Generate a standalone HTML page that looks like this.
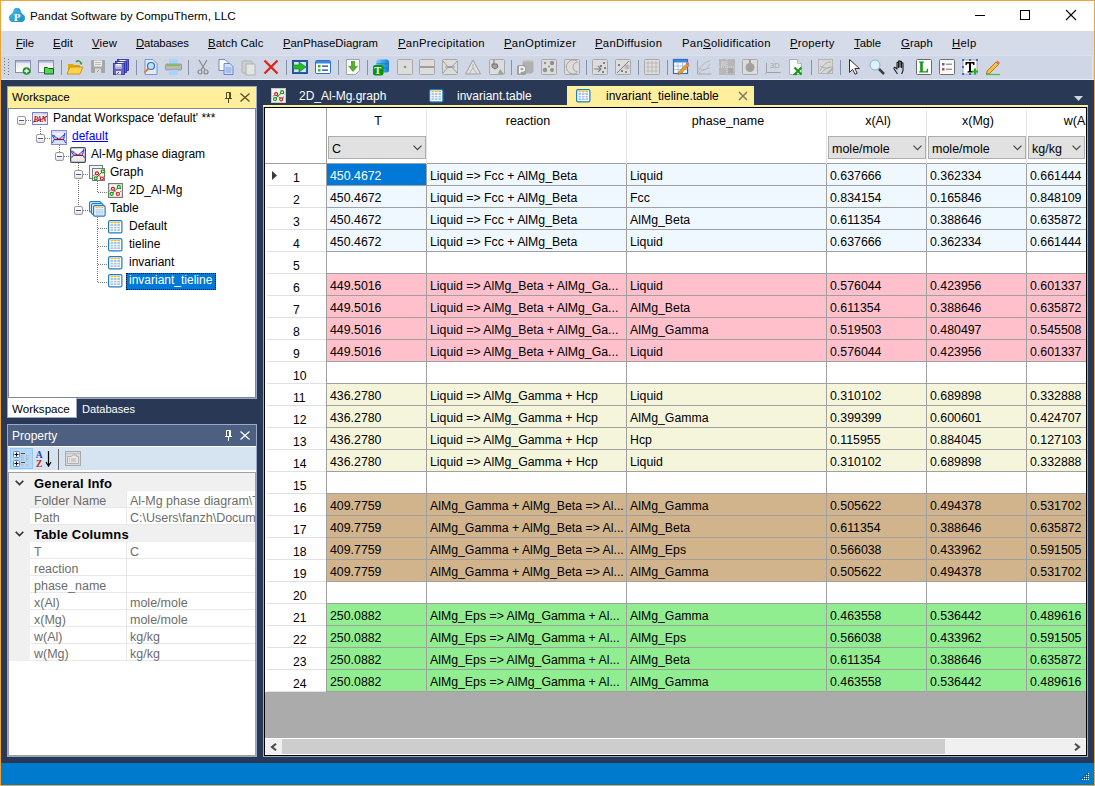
<!DOCTYPE html><html><head><meta charset="utf-8"><title>Pandat</title><style>
*{box-sizing:border-box}
body{margin:0;width:1095px;height:786px;overflow:hidden;position:relative;background:#293955;font-family:"Liberation Sans",sans-serif;color:#000}
.ab{position:absolute}
.t{position:absolute;white-space:pre;line-height:1}
svg{position:absolute;overflow:visible}
</style></head><body>
<div class="ab" style="left:0;top:0;width:1095px;height:31px;background:#fff"></div>
<svg style="left:9px;top:7px" width="16" height="16" viewBox="0 0 16 16"><defs><linearGradient id="apg" x1="0" y1="0" x2="1" y2="1"><stop offset="0" stop-color="#4ab4dc"/><stop offset="1" stop-color="#1590c4"/></linearGradient></defs><g fill="url(#apg)"><circle cx="8" cy="4.3" r="3.6"/><circle cx="4" cy="11" r="4"/><circle cx="12" cy="11" r="4"/><path d="M5 3.5L11 3.5L15.5 10L13 15H3L0.5 10z"/></g><text x="4.8" y="14.2" font-size="11" font-weight="bold" font-family="Liberation Serif" fill="#fff">P</text></svg>
<div class="t" style="left:30px;top:10px;font-size:11.75px;color:#000">Pandat Software by CompuTherm, LLC</div>
<div class="ab" style="left:975px;top:15px;width:10px;height:1px;background:#000"></div>
<div class="ab" style="left:1020px;top:10px;width:10px;height:10px;border:1px solid #000"></div>
<svg style="left:1066px;top:10px" width="10" height="10" viewBox="0 0 10 10"><path d="M0 0 L10 10 M10 0 L0 10" stroke="#000" stroke-width="1.1"/></svg>
<div class="ab" style="left:0;top:31px;width:1095px;height:24px;background:#d6dbe9"></div>
<div class="t" style="left:16px;top:38px;font-size:11.3px;letter-spacing:-0.1px;color:#000"><u>F</u>ile</div>
<div class="t" style="left:53px;top:38px;font-size:11.3px;letter-spacing:0.13px;color:#000"><u>E</u>dit</div>
<div class="t" style="left:92px;top:38px;font-size:11.3px;letter-spacing:0.17px;color:#000"><u>V</u>iew</div>
<div class="t" style="left:136px;top:38px;font-size:11.3px;letter-spacing:-0.14px;color:#000"><u>D</u>atabases</div>
<div class="t" style="left:208px;top:38px;font-size:11.3px;letter-spacing:0.08px;color:#000"><u>B</u>atch Calc</div>
<div class="t" style="left:283px;top:38px;font-size:11.3px;letter-spacing:0.01px;color:#000"><u>P</u>anPhaseDiagram</div>
<div class="t" style="left:398px;top:38px;font-size:11.3px;letter-spacing:0.29px;color:#000"><u>P</u>anPrecipitation</div>
<div class="t" style="left:504px;top:38px;font-size:11.3px;letter-spacing:0.32px;color:#000"><u>P</u>anOptimizer</div>
<div class="t" style="left:595px;top:38px;font-size:11.3px;letter-spacing:0.28px;color:#000"><u>P</u>anDiffusion</div>
<div class="t" style="left:682px;top:38px;font-size:11.3px;letter-spacing:0.31px;color:#000">Pan<u>S</u>olidification</div>
<div class="t" style="left:790px;top:38px;font-size:11.3px;letter-spacing:0.23px;color:#000"><u>P</u>roperty</div>
<div class="t" style="left:854px;top:38px;font-size:11.3px;letter-spacing:0px;color:#000"><u>T</u>able</div>
<div class="t" style="left:901px;top:38px;font-size:11.3px;letter-spacing:0.08px;color:#000"><u>G</u>raph</div>
<div class="t" style="left:952px;top:38px;font-size:11.3px;letter-spacing:0.31px;color:#000"><u>H</u>elp</div>
<div class="ab" style="left:0;top:55px;width:1095px;height:1px;background:#dde1ee"></div>
<div class="ab" style="left:0;top:56px;width:1095px;height:23px;background:#cfd6e5"></div>
<div class="ab" style="left:1092px;top:56px;width:1px;height:23px;background:#dde3f0"></div>
<div class="ab" style="left:0;top:79px;width:1095px;height:1px;background:#e9ecf5"></div>
<div class="ab" style="left:4px;top:58px;width:1px;height:1px;background:#6d7587"></div>
<div class="ab" style="left:8px;top:59px;width:1px;height:1px;background:#6d7587"></div>
<div class="ab" style="left:4px;top:61px;width:1px;height:1px;background:#6d7587"></div>
<div class="ab" style="left:8px;top:62px;width:1px;height:1px;background:#6d7587"></div>
<div class="ab" style="left:4px;top:64px;width:1px;height:1px;background:#6d7587"></div>
<div class="ab" style="left:8px;top:65px;width:1px;height:1px;background:#6d7587"></div>
<div class="ab" style="left:4px;top:67px;width:1px;height:1px;background:#6d7587"></div>
<div class="ab" style="left:8px;top:68px;width:1px;height:1px;background:#6d7587"></div>
<div class="ab" style="left:4px;top:70px;width:1px;height:1px;background:#6d7587"></div>
<div class="ab" style="left:8px;top:71px;width:1px;height:1px;background:#6d7587"></div>
<div class="ab" style="left:4px;top:73px;width:1px;height:1px;background:#6d7587"></div>
<div class="ab" style="left:8px;top:74px;width:1px;height:1px;background:#6d7587"></div>
<svg style="left:15px;top:59px" width="16" height="16" viewBox="0 0 16 16"><defs><linearGradient id="wg" x1="0" y1="0" x2="0" y2="1"><stop offset="0" stop-color="#e4e4e4"/><stop offset="1" stop-color="#ffffff"/></linearGradient></defs><rect x="0.5" y="1.5" width="15" height="12" fill="url(#wg)" stroke="#8c8cb8"/><rect x="1" y="2" width="14" height="1.6" fill="#b4b4d8"/><circle cx="11.5" cy="12" r="3.8" fill="#129a12"/><rect x="10.8" y="9.8" width="1.5" height="4.5" fill="#fff"/><rect x="9.3" y="11.3" width="4.5" height="1.5" fill="#fff"/></svg>
<svg style="left:38px;top:59px" width="16" height="16" viewBox="0 0 16 16"><defs><linearGradient id="wg" x1="0" y1="0" x2="0" y2="1"><stop offset="0" stop-color="#e4e4e4"/><stop offset="1" stop-color="#ffffff"/></linearGradient></defs><rect x="0.5" y="1.5" width="15" height="12" fill="url(#wg)" stroke="#8c8cb8"/><rect x="1" y="2" width="14" height="1.6" fill="#b4b4d8"/><path d="M6.5 8.5h3l1 1h5v5.5h-9z" fill="#5cd25c" stroke="#0a6a0a" stroke-width="1"/></svg>
<div class="ab" style="left:61px;top:60px;width:1px;height:15px;background:#8591a8"></div>
<svg style="left:67px;top:59px" width="16" height="16" viewBox="0 0 16 16"><path d="M1 5h5l1 1h6v9H1z" fill="#e0a800"/><path d="M3 8h13l-3 7H0z" fill="#ffd34a" stroke="#c08a00" stroke-width="0.8"/><path d="M9 3c2-2 5-1 5 2" stroke="#3aa040" stroke-width="1.6" fill="none"/><path d="M12.5 4.5l2 1.5 1-2.5z" fill="#3aa040"/></svg>
<svg style="left:91px;top:59px" width="16" height="16" viewBox="0 0 16 16"><rect x="0" y="1" width="14" height="13" rx="1" fill="#a6a6a6"/><rect x="3" y="1.5" width="8" height="6" fill="#ececec"/><path d="M4 3.5h6M4 5.5h6" stroke="#b4b4b4" stroke-width="0.9"/><rect x="4" y="9.5" width="6" height="4.5" fill="#d8d8d8"/><path d="M6 13l2-2" stroke="#a0a0a0"/></svg>
<svg style="left:113px;top:59px" width="16" height="16" viewBox="0 0 16 16"><rect x="4.5" y="0.5" width="11" height="11" fill="#6464d8" stroke="#2a2aa0" stroke-width="0.8"/><rect x="6.5" y="1" width="6" height="4.5" fill="#fbfbf4"/><rect x="2.5" y="2.5" width="11" height="11" fill="#6464d8" stroke="#2a2aa0" stroke-width="0.8"/><rect x="4.5" y="3" width="6" height="4.5" fill="#fbfbf4"/><rect x="0.5" y="4.5" width="11" height="11" fill="#6464d8" stroke="#2a2aa0" stroke-width="0.8"/><rect x="2.5" y="5" width="6" height="4.5" fill="#fbfbf4"/><path d="M3 7h5M3 8.5h5" stroke="#9090a0" stroke-width="0.7"/><rect x="3" y="12" width="5" height="3.5" fill="#e8e8d8"/><path d="M4 15l2-2" stroke="#2a2aa0" stroke-width="0.8"/></svg>
<div class="ab" style="left:136px;top:60px;width:1px;height:15px;background:#8591a8"></div>
<svg style="left:143px;top:59px" width="16" height="16" viewBox="0 0 16 16"><path d="M2 0.5h8l4 4v11H2z" fill="#dfeafa" stroke="#6a7fc0" stroke-width="0.8"/><circle cx="8" cy="7" r="3.5" fill="#bfe0ff" stroke="#2f6fc0" stroke-width="1.2"/><path d="M5.5 9.5L1.5 13.5" stroke="#e08020" stroke-width="1.8"/></svg>
<svg style="left:165px;top:59px" width="16" height="16" viewBox="0 0 16 16"><rect x="4" y="0" width="9" height="5" fill="#a8d4f8"/><rect x="0.5" y="5" width="16" height="6" rx="1" fill="#b8b8b8" stroke="#808080" stroke-width="0.6"/><rect x="2" y="5.5" width="13" height="1.5" fill="#7cc040"/><rect x="4" y="11" width="9" height="5" fill="#a8d4f8"/></svg>
<div class="ab" style="left:188px;top:60px;width:1px;height:15px;background:#8591a8"></div>
<svg style="left:195px;top:59px" width="16" height="16" viewBox="0 0 16 16"><path d="M4 1L10 11M12 1L6 11" stroke="#8a8a8a" stroke-width="1.2"/><circle cx="5" cy="13" r="2" fill="none" stroke="#8a8a8a" stroke-width="1.2"/><circle cx="11" cy="13" r="2" fill="none" stroke="#8a8a8a" stroke-width="1.2"/></svg>
<svg style="left:218px;top:59px" width="16" height="16" viewBox="0 0 16 16"><path d="M1 0.5h6l3 3v8H1z" fill="#fff" stroke="#5070c0" stroke-width="0.8"/><path d="M6 4.5h6l3 3v8H6z" fill="#cfe0fa" stroke="#5070c0" stroke-width="0.8"/><path d="M7.5 9h6M7.5 11h6M7.5 13h6" stroke="#6080c8" stroke-width="0.7"/></svg>
<svg style="left:241px;top:59px" width="16" height="16" viewBox="0 0 16 16"><rect x="1" y="2" width="10" height="12" rx="1" fill="#d0d0d0" stroke="#a8a8a8" stroke-width="0.8"/><rect x="5" y="5" width="9" height="11" fill="#e4e4e4" stroke="#a8a8a8" stroke-width="0.8"/></svg>
<svg style="left:263px;top:59px" width="16" height="16" viewBox="0 0 16 16"><path d="M1.5 1.5L14.5 14.5M14.5 1.5L1.5 14.5" stroke="#e02010" stroke-width="2.2"/></svg>
<div class="ab" style="left:286px;top:60px;width:1px;height:15px;background:#8591a8"></div>
<svg style="left:292px;top:59px" width="16" height="16" viewBox="0 0 16 16"><rect x="0.5" y="1.5" width="15" height="13" fill="#2a5ab0" stroke="#1a3a80" stroke-width="0.8"/><rect x="2" y="3" width="12" height="10" fill="#cfe3f8"/><path d="M1 6h6V3l7 5-7 5v-3H1z" fill="#20c020" stroke="#107010" stroke-width="0.6"/></svg>
<svg style="left:315px;top:59px" width="16" height="16" viewBox="0 0 16 16"><rect x="0.5" y="1.5" width="15" height="13" rx="1" fill="#fff" stroke="#2a70c8" stroke-width="1"/><rect x="1" y="2" width="14" height="2.5" fill="#3a88e0"/><rect x="3" y="6" width="2.5" height="2.5" fill="#40b040"/><rect x="3" y="10" width="2.5" height="2.5" fill="#40b040"/><path d="M7 7.2h6M7 11.2h6" stroke="#203a80" stroke-width="1.2"/></svg>
<div class="ab" style="left:338px;top:60px;width:1px;height:15px;background:#8591a8"></div>
<svg style="left:345px;top:59px" width="16" height="16" viewBox="0 0 16 16"><path d="M1.5 0.5h13v11l-4 4h-9z" fill="#fafafa" stroke="#909090" stroke-width="0.8"/><path d="M6 2h4v5h3l-5 6-5-6h3z" fill="#50b030"/></svg>
<div class="ab" style="left:367px;top:60px;width:1px;height:15px;background:#8591a8"></div>
<svg style="left:373px;top:59px" width="17" height="17" viewBox="0 0 17 17"><defs><linearGradient id="dbg" x1="0" y1="0" x2="1" y2="0"><stop offset="0" stop-color="#8fd0fa"/><stop offset="0.5" stop-color="#3ea8ec"/><stop offset="1" stop-color="#1a7fd0"/></linearGradient></defs><rect x="3" y="0.5" width="13" height="13" rx="2.5" fill="url(#dbg)"/><path d="M3.5 4.8h12M3.5 9h12" stroke="#1a6fc0" stroke-width="0.8"/><rect x="0" y="6" width="10.5" height="10.5" rx="2.2" fill="#0a940a"/><text x="1.3" y="14.8" font-size="10.5" font-weight="bold" font-family="Liberation Serif" fill="#fff">T</text></svg>
<svg style="left:397px;top:59px" width="16" height="16" viewBox="0 0 16 16"><rect x="0.5" y="0.5" width="15" height="15" rx="1" fill="#dcdcdc" stroke="#a8a8a8"/><circle cx="8" cy="8" r="1.3" fill="#909090"/></svg>
<svg style="left:419px;top:59px" width="16" height="16" viewBox="0 0 16 16"><rect x="0.5" y="0.5" width="15" height="15" rx="1" fill="#dcdcdc" stroke="#a8a8a8"/><path d="M1 8h14" stroke="#909090" stroke-width="1.6"/></svg>
<svg style="left:442px;top:59px" width="16" height="16" viewBox="0 0 16 16"><rect x="0.5" y="0.5" width="15" height="15" rx="1" fill="#dcdcdc" stroke="#a8a8a8"/><path d="M1 2c3 4 5 6 7 6s4-2 7-6M1 14c3-4 5-6 7-6s4 2 7 6M3 8h10" stroke="#909090" stroke-width="0.9" fill="none"/></svg>
<svg style="left:465px;top:59px" width="16" height="16" viewBox="0 0 16 16"><path d="M8 1L15.5 15H0.5z" fill="#e0e0e0" stroke="#a0a0a0"/><path d="M8 9L4 15M8 9L12 15M8 9L8 5" stroke="#a8a8a8" stroke-width="0.8"/></svg>
<svg style="left:489px;top:59px" width="16" height="16" viewBox="0 0 16 16"><rect x="0.5" y="0.5" width="15" height="15" rx="1" fill="#dcdcdc" stroke="#a8a8a8"/><path d="M5 1v4M3 5h5l1 3-3 2-3-2z" stroke="#707070" fill="#a0a0a0" stroke-width="1"/><path d="M9 15l2-5 4 5z" fill="#a0a0a0"/></svg>
<div class="ab" style="left:511px;top:60px;width:1px;height:15px;background:#8591a8"></div>
<svg style="left:518px;top:59px" width="16" height="16" viewBox="0 0 16 16"><ellipse cx="10" cy="2.5" rx="5.5" ry="2" fill="#c8c8c8"/><rect x="4.5" y="2.5" width="11" height="10" fill="#b0b0b0"/><ellipse cx="10" cy="12.5" rx="5.5" ry="2" fill="#b0b0b0"/><rect x="-1" y="6" width="9" height="10" rx="1.5" fill="#a0a0a0"/><path d="M1.8 14.5V8h2.5a2 2 0 010 4H1.8" stroke="#fff" stroke-width="1.5" fill="none"/></svg>
<svg style="left:541px;top:59px" width="16" height="16" viewBox="0 0 16 16"><rect x="0.5" y="0.5" width="15" height="15" rx="1" fill="#dcdcdc" stroke="#a8a8a8"/><circle cx="4" cy="4" r="1.2" fill="#909090"/><circle cx="11" cy="4" r="2.2" fill="#909090"/><circle cx="4" cy="11" r="2.2" fill="#909090"/><circle cx="11" cy="11" r="2" fill="#909090"/><circle cx="8" cy="7.5" r="1" fill="#909090"/></svg>
<svg style="left:564px;top:59px" width="16" height="16" viewBox="0 0 16 16"><rect x="0.5" y="0.5" width="15" height="15" rx="1" fill="#dcdcdc" stroke="#a8a8a8"/><path d="M13 2a7 7 0 100 12M14 3a5 5 0 100 10" stroke="#a0a0a0" stroke-width="0.9" fill="none"/></svg>
<div class="ab" style="left:586px;top:60px;width:1px;height:15px;background:#8591a8"></div>
<svg style="left:592px;top:59px" width="16" height="16" viewBox="0 0 16 16"><rect x="0.5" y="0.5" width="15" height="15" rx="1" fill="#dcdcdc" stroke="#a8a8a8"/><path d="M2 10h7M6 7l3 3-3 3" stroke="#808080" stroke-width="1.2" fill="none"/><rect x="11" y="3" width="2" height="2" fill="#808080"/><rect x="8" y="6" width="2" height="2" fill="#808080"/><rect x="12" y="8" width="2" height="2" fill="#808080"/><rect x="10" y="12" width="2" height="2" fill="#808080"/></svg>
<svg style="left:615px;top:59px" width="16" height="16" viewBox="0 0 16 16"><rect x="0.5" y="0.5" width="15" height="15" rx="1" fill="#dcdcdc" stroke="#a8a8a8"/><path d="M2 14L14 2" stroke="#808080" stroke-width="1"/><circle cx="12" cy="8" r="2.5" fill="#b8b8b8"/><rect x="3" y="5" width="2" height="2" fill="#808080"/><rect x="6" y="11" width="2" height="2" fill="#808080"/><rect x="10" y="12" width="2" height="2" fill="#909090"/></svg>
<div class="ab" style="left:638px;top:60px;width:1px;height:15px;background:#8591a8"></div>
<svg style="left:644px;top:59px" width="16" height="16" viewBox="0 0 16 16"><rect x="0.5" y="0.5" width="15" height="15" rx="1" fill="#dcdcdc" stroke="#a8a8a8"/><path d="M4 2v12M8 2v12M12 2v12M2 4h12M2 8h12M2 12h12" stroke="#b4b4b4" stroke-width="0.8"/></svg>
<div class="ab" style="left:667px;top:60px;width:1px;height:15px;background:#8591a8"></div>
<svg style="left:673px;top:59px" width="16" height="16" viewBox="0 0 16 16"><rect x="0.5" y="0.5" width="14" height="14" fill="#fff" stroke="#2a70c8" stroke-width="1.2"/><rect x="1" y="1" width="13" height="2.5" fill="#3a88e0"/><path d="M1 7h13M1 10.5h13M5 3.5v11M9.5 3.5v11" stroke="#90b8e8" stroke-width="0.8"/><path d="M5 15.5l1-3 8-8 2 2-8 8z" fill="#f0a020" stroke="#a05a00" stroke-width="0.6"/><circle cx="14.5" cy="4.5" r="1.5" fill="#e060a0"/></svg>
<svg style="left:696px;top:59px" width="16" height="16" viewBox="0 0 16 16"><path d="M1.5 1v14h14" stroke="#a8a8a8" stroke-width="1" fill="none"/><path d="M2 13c3-6 6-10 12-11M2 9c4 2 8 4 12-4M3 14c4-3 7-4 11-5" stroke="#b8b8b8" stroke-width="0.9" fill="none"/></svg>
<svg style="left:719px;top:59px" width="16" height="16" viewBox="0 0 16 16"><rect x="0" y="0" width="16" height="16" fill="#b8b8b8"/><rect x="2" y="2" width="5" height="5" fill="#c8c8c8"/><rect x="9" y="9" width="5" height="5" fill="#a8a8a8"/><path d="M8 0v16M0 8h16" stroke="#dcdcdc" stroke-width="1" stroke-dasharray="1 1"/></svg>
<svg style="left:742px;top:59px" width="16" height="16" viewBox="0 0 16 16"><rect x="0.5" y="0.5" width="15" height="15" rx="1" fill="#dcdcdc" stroke="#a8a8a8"/><circle cx="8" cy="8.5" r="4.5" fill="#a0a0a0"/><path d="M8 1v4" stroke="#a0a0a0" stroke-width="2"/></svg>
<svg style="left:765px;top:59px" width="16" height="16" viewBox="0 0 16 16"><path d="M1.5 4v9.5h14M1.5 13.5l-1.5 2" stroke="#a0a0a0" stroke-width="1" fill="none"/><text x="5" y="9" font-size="7.5" font-family="Liberation Sans" fill="#a8a8a8">3D</text></svg>
<svg style="left:788px;top:59px" width="16" height="16" viewBox="0 0 16 16"><path d="M1.5 0.5h8l4 4v11h-12z" fill="#fafafa" stroke="#a0a0a0" stroke-width="0.8"/><path d="M9.5 0.5v4h4" fill="#e0e0e0" stroke="#a0a0a0" stroke-width="0.6"/><path d="M6.5 8.5l7 7M13.5 8.5l-7 7" stroke="#1a9a1a" stroke-width="2.2"/><path d="M5 15.5h4" stroke="#1a9a1a" stroke-width="1.2"/></svg>
<div class="ab" style="left:811px;top:60px;width:1px;height:15px;background:#8591a8"></div>
<svg style="left:818px;top:59px" width="16" height="16" viewBox="0 0 16 16"><rect x="0.5" y="0.5" width="14" height="14" fill="#d8d8d8" stroke="#b4b4b4"/><path d="M2 12c3-6 6-9 11-9M3 14c4-4 7-6 11-6M2 7c3 2 7 3 10 1" stroke="#a8a8a8" stroke-width="0.9" fill="none"/><path d="M9 15l6-6" stroke="#b0b0b0" stroke-width="2"/></svg>
<div class="ab" style="left:840px;top:60px;width:1px;height:15px;background:#8591a8"></div>
<svg style="left:848px;top:59px" width="16" height="16" viewBox="0 0 16 16"><path d="M1.5 0.5v13l3.2-3.2 2.3 5 2.2-1-2.3-4.8h4.5z" fill="#fff" stroke="#303030" stroke-width="1"/></svg>
<svg style="left:869px;top:59px" width="16" height="16" viewBox="0 0 16 16"><circle cx="6" cy="6" r="5" fill="#dff0ff" stroke="#8ab0d0" stroke-width="1"/><path d="M10 10l5 5" stroke="#404040" stroke-width="2.5"/></svg>
<svg style="left:893px;top:59px" width="16" height="16" viewBox="0 0 16 16"><path d="M4.5 15C3.5 13 1.5 11 1 9.5c-.3-1 .8-1.5 1.5-.8L4 10V4c0-1 1.5-1 1.5 0v4.5V2.5c0-1 1.5-1 1.5 0V8V3c0-1 1.5-1 1.5 0v5.5V4.5c0-1 1.5-1 1.5 0V11c0 2-1 3-1.5 4" stroke="#1a1a1a" stroke-width="1.1" fill="none" stroke-linejoin="round"/></svg>
<svg style="left:916px;top:59px" width="16" height="16" viewBox="0 0 16 16"><rect x="0.5" y="0.5" width="15" height="15" rx="1" fill="#fff" stroke="#6a6a6a"/><path d="M3 2.5h5v1l-1.2.3v8.4h3.5l.8-2.5h1.1l-.3 3.8H3v-1l1.2-.3V3.8L3 3.5z" fill="#16961a"/></svg>
<svg style="left:939px;top:59px" width="16" height="16" viewBox="0 0 16 16"><rect x="0.5" y="0.5" width="15" height="15" rx="1" fill="#fafafa" stroke="#707070"/><rect x="3" y="4" width="2.5" height="2.5" fill="#6060a8"/><rect x="3" y="9" width="2.5" height="2.5" fill="#c05030"/><path d="M7 5.2h6M7 10.2h6" stroke="#606060" stroke-width="0.9"/></svg>
<svg style="left:962px;top:59px" width="16" height="16" viewBox="0 0 16 16"><rect x="1" y="1" width="14" height="14" fill="#fff" stroke="#9a9a9a" stroke-width="0.8"/><path d="M3.5 3h9v3h-1.2l-.6-1.6H9v7.6l1.5.5V13.5h-5V12.5l1.5-.5V4.4H5.3L4.7 6H3.5z" fill="#000"/><path d="M13 9.5v6M10 12.5h6" stroke="#20b020" stroke-width="2"/><rect x="0" y="0" width="2" height="2" fill="#3070d0"/><rect x="7" y="0" width="2" height="2" fill="#3070d0"/><rect x="14" y="0" width="2" height="2" fill="#3070d0"/><rect x="0" y="7" width="2" height="2" fill="#3070d0"/><rect x="0" y="14" width="2" height="2" fill="#3070d0"/><rect x="7" y="14" width="2" height="2" fill="#3070d0"/></svg>
<svg style="left:985px;top:59px" width="16" height="16" viewBox="0 0 16 16"><path d="M2 12l9-9 2.5 2.5-9 9L1.5 15z" fill="#f8c040" stroke="#b06000" stroke-width="0.8"/><path d="M11 3l1.5-1.5 2.5 2.5L13.5 5.5z" fill="#e07070"/><path d="M1 15.5h14" stroke="#40c040" stroke-width="1.2"/></svg>
<div class="ab" style="left:7px;top:86px;width:250px;height:313px;background:#9ba7c9"></div>
<div class="ab" style="left:8px;top:87px;width:248px;height:21px;background:linear-gradient(#fff5a0,#ffef9c 25%,#ffee9b)"></div>
<div class="ab" style="left:8px;top:108px;width:248px;height:290px;background:#828790"></div>
<div class="ab" style="left:9px;top:109px;width:246px;height:288px;background:#fff"></div>
<div class="t" style="left:12px;top:91px;font-size:11.6px;color:#000">Workspace</div>
<svg style="left:225px;top:92px" width="8" height="11" viewBox="0 0 8 11"><path d="M1.5 0.5h4v6h-4z" stroke="#5a4a26" stroke-width="1" fill="none"/><path d="M4.5 0.5v6" stroke="#5a4a26" stroke-width="1"/><path d="M0 6.5h7M3.5 6.5v4.5" stroke="#5a4a26" stroke-width="1"/></svg>
<svg style="left:240px;top:93px" width="10" height="9" viewBox="0 0 10 9"><path d="M0.5 0.5L9.5 8.5M9.5 0.5L0.5 8.5" stroke="#5a4a26" stroke-width="1.3"/></svg>
<div class="ab" style="left:40px;top:127px;width:1px;height:7px;background:repeating-linear-gradient(180deg,#7a7a7a 0 1px,transparent 1px 2px)"></div>
<div class="ab" style="left:59px;top:145px;width:1px;height:7px;background:repeating-linear-gradient(180deg,#7a7a7a 0 1px,transparent 1px 2px)"></div>
<div class="ab" style="left:78px;top:163px;width:1px;height:7px;background:repeating-linear-gradient(180deg,#7a7a7a 0 1px,transparent 1px 2px)"></div>
<div class="ab" style="left:78px;top:180px;width:1px;height:26px;background:repeating-linear-gradient(180deg,#7a7a7a 0 1px,transparent 1px 2px)"></div>
<div class="ab" style="left:97px;top:181px;width:1px;height:12px;background:repeating-linear-gradient(180deg,#7a7a7a 0 1px,transparent 1px 2px)"></div>
<div class="ab" style="left:97px;top:217px;width:1px;height:66px;background:repeating-linear-gradient(180deg,#7a7a7a 0 1px,transparent 1px 2px)"></div>
<div class="ab" style="left:26px;top:120px;width:6px;height:1px;background:repeating-linear-gradient(90deg,#7a7a7a 0 1px,transparent 1px 2px)"></div>
<div class="ab" style="left:45px;top:138px;width:6px;height:1px;background:repeating-linear-gradient(90deg,#7a7a7a 0 1px,transparent 1px 2px)"></div>
<div class="ab" style="left:64px;top:156px;width:6px;height:1px;background:repeating-linear-gradient(90deg,#7a7a7a 0 1px,transparent 1px 2px)"></div>
<div class="ab" style="left:83px;top:174px;width:6px;height:1px;background:repeating-linear-gradient(90deg,#7a7a7a 0 1px,transparent 1px 2px)"></div>
<div class="ab" style="left:83px;top:210px;width:6px;height:1px;background:repeating-linear-gradient(90deg,#7a7a7a 0 1px,transparent 1px 2px)"></div>
<div class="ab" style="left:98px;top:192px;width:10px;height:1px;background:repeating-linear-gradient(90deg,#7a7a7a 0 1px,transparent 1px 2px)"></div>
<div class="ab" style="left:98px;top:228px;width:10px;height:1px;background:repeating-linear-gradient(90deg,#7a7a7a 0 1px,transparent 1px 2px)"></div>
<div class="ab" style="left:98px;top:246px;width:10px;height:1px;background:repeating-linear-gradient(90deg,#7a7a7a 0 1px,transparent 1px 2px)"></div>
<div class="ab" style="left:98px;top:264px;width:10px;height:1px;background:repeating-linear-gradient(90deg,#7a7a7a 0 1px,transparent 1px 2px)"></div>
<div class="ab" style="left:98px;top:282px;width:10px;height:1px;background:repeating-linear-gradient(90deg,#7a7a7a 0 1px,transparent 1px 2px)"></div>
<div class="ab" style="left:17px;top:116px;width:9px;height:9px;border:1px solid #9a9a9a;background:linear-gradient(#fff 40%,#e0e0e0);border-radius:2px"></div>
<div class="ab" style="left:19px;top:120px;width:5px;height:1px;background:#4057b0"></div>
<div class="ab" style="left:36px;top:134px;width:9px;height:9px;border:1px solid #9a9a9a;background:linear-gradient(#fff 40%,#e0e0e0);border-radius:2px"></div>
<div class="ab" style="left:38px;top:138px;width:5px;height:1px;background:#4057b0"></div>
<div class="ab" style="left:55px;top:152px;width:9px;height:9px;border:1px solid #9a9a9a;background:linear-gradient(#fff 40%,#e0e0e0);border-radius:2px"></div>
<div class="ab" style="left:57px;top:156px;width:5px;height:1px;background:#4057b0"></div>
<div class="ab" style="left:74px;top:170px;width:9px;height:9px;border:1px solid #9a9a9a;background:linear-gradient(#fff 40%,#e0e0e0);border-radius:2px"></div>
<div class="ab" style="left:76px;top:174px;width:5px;height:1px;background:#4057b0"></div>
<div class="ab" style="left:74px;top:206px;width:9px;height:9px;border:1px solid #9a9a9a;background:linear-gradient(#fff 40%,#e0e0e0);border-radius:2px"></div>
<div class="ab" style="left:76px;top:210px;width:5px;height:1px;background:#4057b0"></div>
<svg style="left:32px;top:112px" width="16" height="13" viewBox="0 0 16 13"><rect x="0.5" y="0.5" width="15" height="12" fill="#f2f2f6" stroke="#7f7fd0"/><path d="M1 2h14" stroke="#c4c4e4" stroke-width="1"/><path d="M11 1.5h3" stroke="#9a9ad0" stroke-width="0.6"/><text x="1.6" y="9.6" font-size="7.2" font-weight="bold" font-style="italic" font-family="Liberation Serif" fill="#9a1010" letter-spacing="-0.4">PAN</text><path d="M1 10c4-1 9-2 14-6" stroke="#9a1010" stroke-width="0.9" fill="none"/></svg>
<svg style="left:51px;top:130px" width="16" height="15" viewBox="0 0 16 15"><defs><linearGradient id="gd1" x1="0" y1="0" x2="0" y2="1"><stop offset="0" stop-color="#f4f8fe"/><stop offset="1" stop-color="#cfe2f8"/></linearGradient></defs><rect x="0.5" y="0.5" width="15" height="14" fill="url(#gd1)" stroke="#8a8ad0"/><path d="M1 2h14" stroke="#c8c8e8"/><path d="M1.5 5C3 5 5 8 8 9C10 8 12 6 14 3.5M1.5 5.5L3.5 9.5L1.2 12.8M14 3.5L12.5 9.5L14.8 12.8" stroke="#1a1af0" stroke-width="1.1" fill="none" stroke-dasharray="1.3 0.5"/><path d="M4 9.5h9" stroke="#a01010" stroke-width="1.3"/></svg>
<svg style="left:70px;top:147px" width="16" height="16" viewBox="0 0 16 16"><defs><linearGradient id="gd2" x1="0" y1="0" x2="0" y2="1"><stop offset="0" stop-color="#fafafa"/><stop offset="1" stop-color="#e8e8e8"/></linearGradient></defs><rect x="0.6" y="0.6" width="14.8" height="14.8" rx="1.3" fill="url(#gd2)" stroke="#4a4a4a" stroke-width="1.2"/><path d="M1.5 4C3 4 5 7 8 8C10 7 12 5 14 2.5M1.5 4.5L3.5 8L1.2 11M14 2.5L12.5 8L14.8 11" stroke="#1a1af0" stroke-width="1.1" fill="none" stroke-dasharray="1.3 0.5"/><path d="M4 8.3h9" stroke="#a01010" stroke-width="1.3"/></svg>
<svg style="left:89px;top:165px" width="16" height="16" viewBox="0 0 16 16"><rect x="0.5" y="0.5" width="13" height="13" fill="#eef6fc" stroke="#7a7a7a"/><rect x="3.5" y="3.5" width="12" height="12" fill="#f6f6f6" stroke="#7a7a7a"/><path d="M7 4v11M11 4v11M4 7h11M4 11h11" stroke="#dde6ee" stroke-width="0.8"/><path d="M6.7 13.3L13.8 6.4L16.0 8.5" stroke="#119a11" stroke-width="1" fill="none"/><path d="M4.5 10.5L7.9 8.3L12.9 13.5L16.0 10.5" stroke="#d41a1a" stroke-width="1" fill="none" stroke-dasharray="1.2 0.8"/><circle cx="6.7" cy="13.3" r="1.5" fill="#fff" stroke="#119a11" stroke-width="1.2"/><circle cx="13.8" cy="6.4" r="1.5" fill="#fff" stroke="#119a11" stroke-width="1.2"/><circle cx="7.9" cy="8.3" r="1.5" fill="#fff" stroke="#d41a1a" stroke-width="1.2"/><circle cx="12.9" cy="13.5" r="1.5" fill="#fff" stroke="#d41a1a" stroke-width="1.2"/></svg>
<svg style="left:108px;top:183px" width="15" height="15" viewBox="0 0 15 15"><rect x="0.6" y="0.6" width="13.8" height="13.8" fill="#f8f8f8" stroke="#7a7a7a" stroke-width="1.2"/><path d="M5 1v13M9.5 1v13M1 5h13M1 9.5h13" stroke="#dde6ee" stroke-width="0.8"/><path d="M3.7 10.8L10.8 3.9L13.0 6.0" stroke="#119a11" stroke-width="1" fill="none"/><path d="M1.5 8.0L4.9 5.8L9.9 11.0L13.0 8.0" stroke="#d41a1a" stroke-width="1" fill="none" stroke-dasharray="1.2 0.8"/><circle cx="3.7" cy="10.8" r="1.5" fill="#fff" stroke="#119a11" stroke-width="1.2"/><circle cx="10.8" cy="3.9" r="1.5" fill="#fff" stroke="#119a11" stroke-width="1.2"/><circle cx="4.9" cy="5.8" r="1.5" fill="#fff" stroke="#d41a1a" stroke-width="1.2"/><circle cx="9.9" cy="11.0" r="1.5" fill="#fff" stroke="#d41a1a" stroke-width="1.2"/></svg>
<svg style="left:89px;top:201px" width="17" height="16" viewBox="0 0 17 16"><rect x="0.6" y="0.6" width="11.5" height="10.5" rx="1.3" fill="#fff" stroke="#1f7bc2" stroke-width="1.2"/><rect x="2.6" y="2.6" width="11.5" height="10.5" rx="1.3" fill="#fff" stroke="#1f7bc2" stroke-width="1.2"/><rect x="4.6" y="4.6" width="11.5" height="10.5" rx="1.3" fill="#fff" stroke="#1f7bc2" stroke-width="1.2"/><path d="M6.5 6.6h8" stroke="#f4b820" stroke-width="1.2"/><path d="M6.5 8.8h8M6.5 11h8M6.5 13.2h8" stroke="#a9c6e6" stroke-width="1.3"/><path d="M9.2 6v8M11.9 6v8" stroke="#fff" stroke-width="0.7"/><path d="M9.2 7.5v6M11.9 7.5v6" stroke="#a9c6e6" stroke-width="0.5"/></svg>
<svg style="left:108px;top:220px" width="15" height="14" viewBox="0 0 15 14"><rect x="0.6" y="0.6" width="13.3" height="12.3" rx="1.5" fill="#fff" stroke="#1f7bc2" stroke-width="1.2"/><path d="M2.5 2.6h9.5" stroke="#f4b820" stroke-width="1.4"/><path d="M2.5 5h9.5M2.5 7.6h9.5M2.5 10.2h9.5" stroke="#a9c6e6" stroke-width="1.8"/><path d="M5.5 2v9.5M8.9 2v9.5" stroke="#fff" stroke-width="0.8"/></svg>
<svg style="left:108px;top:238px" width="15" height="14" viewBox="0 0 15 14"><rect x="0.6" y="0.6" width="13.3" height="12.3" rx="1.5" fill="#fff" stroke="#1f7bc2" stroke-width="1.2"/><path d="M2.5 2.6h9.5" stroke="#f4b820" stroke-width="1.4"/><path d="M2.5 5h9.5M2.5 7.6h9.5M2.5 10.2h9.5" stroke="#a9c6e6" stroke-width="1.8"/><path d="M5.5 2v9.5M8.9 2v9.5" stroke="#fff" stroke-width="0.8"/></svg>
<svg style="left:108px;top:256px" width="15" height="14" viewBox="0 0 15 14"><rect x="0.6" y="0.6" width="13.3" height="12.3" rx="1.5" fill="#fff" stroke="#1f7bc2" stroke-width="1.2"/><path d="M2.5 2.6h9.5" stroke="#f4b820" stroke-width="1.4"/><path d="M2.5 5h9.5M2.5 7.6h9.5M2.5 10.2h9.5" stroke="#a9c6e6" stroke-width="1.8"/><path d="M5.5 2v9.5M8.9 2v9.5" stroke="#fff" stroke-width="0.8"/></svg>
<svg style="left:108px;top:274px" width="15" height="14" viewBox="0 0 15 14"><rect x="0.6" y="0.6" width="13.3" height="12.3" rx="1.5" fill="#fff" stroke="#1f7bc2" stroke-width="1.2"/><path d="M2.5 2.6h9.5" stroke="#f4b820" stroke-width="1.4"/><path d="M2.5 5h9.5M2.5 7.6h9.5M2.5 10.2h9.5" stroke="#a9c6e6" stroke-width="1.8"/><path d="M5.5 2v9.5M8.9 2v9.5" stroke="#fff" stroke-width="0.8"/></svg>
<div class="ab" style="left:126px;top:273px;width:90px;height:17px;background:#0078d7;border:1px dotted #000"></div>
<div class="t" style="left:53px;top:112px;font-size:12px;color:#000;">Pandat Workspace 'default' ***</div>
<div class="t" style="left:72px;top:130px;font-size:12px;color:#0000ff;text-decoration:underline;">default</div>
<div class="t" style="left:91px;top:148px;font-size:12px;color:#000;">Al-Mg phase diagram</div>
<div class="t" style="left:110px;top:166px;font-size:12px;color:#000;">Graph</div>
<div class="t" style="left:129px;top:184px;font-size:12px;color:#000;">2D_Al-Mg</div>
<div class="t" style="left:110px;top:202px;font-size:12px;color:#000;">Table</div>
<div class="t" style="left:129px;top:220px;font-size:12px;color:#000;">Default</div>
<div class="t" style="left:129px;top:238px;font-size:12px;color:#000;">tieline</div>
<div class="t" style="left:129px;top:256px;font-size:12px;color:#000;">invariant</div>
<div class="t" style="left:129px;top:274px;font-size:12px;color:#fff;">invariant_tieline</div>
<div class="ab" style="left:77px;top:398px;width:180px;height:1px;background:#9ba7c9"></div>
<div class="ab" style="left:7px;top:398px;width:70px;height:20px;background:#9ba7c9"></div>
<div class="ab" style="left:8px;top:398px;width:68px;height:19px;background:#fff"></div>
<div class="t" style="left:12px;top:403px;font-size:11.6px;color:#000">Workspace</div>
<div class="t" style="left:82px;top:404px;font-size:11.1px;color:#fff">Databases</div>
<div class="ab" style="left:7px;top:424px;width:250px;height:333px;background:#9ba7c9"></div>
<div class="ab" style="left:8px;top:425px;width:248px;height:21px;background:#4d6082"></div>
<div class="ab" style="left:8px;top:446px;width:248px;height:310px;background:#fff"></div>
<div class="t" style="left:12px;top:430px;font-size:12px;color:#fff">Property</div>
<svg style="left:225px;top:430px" width="8" height="11" viewBox="0 0 8 11"><path d="M1.5 0.5h4v6h-4z" stroke="#fff" stroke-width="1" fill="none"/><path d="M4.5 0.5v6" stroke="#fff" stroke-width="1"/><path d="M0 6.5h7M3.5 6.5v4.5" stroke="#fff" stroke-width="1"/></svg>
<svg style="left:240px;top:431px" width="10" height="9" viewBox="0 0 10 9"><path d="M0.5 0.5L9.5 8.5M9.5 0.5L0.5 8.5" stroke="#fff" stroke-width="1.3"/></svg>
<div class="ab" style="left:8px;top:447px;width:248px;height:23px;background:#d6e3f1"></div>
<div class="ab" style="left:10px;top:448px;width:23px;height:21px;background:#b6d8f6;border:1px solid #97c8f4"></div>
<svg style="left:13px;top:451px" width="18" height="16" viewBox="0 0 18 16"><rect x="0.5" y="0.5" width="6" height="6" rx="1" fill="#fff" stroke="#4a90d0"/><rect x="0.5" y="9.5" width="6" height="6" rx="1" fill="#fff" stroke="#4a90d0"/><path d="M1.5 3.5h4M3.5 1.5v4M1.5 12.5h4M3.5 10.5v4" stroke="#000" stroke-width="1.2"/><path d="M8 2.5h4M8 11.5h4" stroke="#505050" stroke-width="1"/><path d="M8 4.8h3M13 4.8h3M8 6.8h3M13 6.8h3M8 8.8h3M13 8.8h3M8 14h3M13 14h3" stroke="#a0a090" stroke-width="0.8" stroke-dasharray="1 0.5"/></svg>
<svg style="left:36px;top:450px" width="16" height="17" viewBox="0 0 16 17"><text x="-0.3" y="8.2" font-size="9.5" font-weight="bold" font-family="Liberation Serif" fill="#2848b8">A</text><text x="0" y="16.5" font-size="9.5" font-weight="bold" font-family="Liberation Serif" fill="#c02828">Z</text><path d="M12.5 1v14M10 12l2.5 4 2.5-4" stroke="#000" stroke-width="1.2" fill="none"/></svg>
<div class="ab" style="left:58px;top:449px;width:1px;height:21px;background:#6a6a6a"></div>
<svg style="left:65px;top:451px" width="16" height="15" viewBox="0 0 16 15"><rect x="0.5" y="0.5" width="15" height="14" fill="#dadada" stroke="#a8a8a8"/><path d="M1 2.5h14" stroke="#c0c0c0"/><path d="M2.5 5.5h4l1-1.5h4v1.5h2v7h-11z" fill="#e6e6e6" stroke="#b0b0b0"/><path d="M4 8h1M6 8h5M4 10h1M6 10h5" stroke="#a0a0a0" stroke-width="0.8"/></svg>
<div class="ab" style="left:8px;top:472px;width:248px;height:284px;background:#a0a0a0"></div>
<div class="ab" style="left:9px;top:473px;width:246px;height:282px;background:#fff"></div>
<div class="ab" style="left:9px;top:473px;width:246px;height:1px;background:#f0f0f0"></div>
<div class="ab" style="left:9px;top:473px;width:21px;height:188px;background:#f0f0f0"></div>
<div class="ab" style="left:30px;top:474px;width:225px;height:17px;background:#f0f0f0"></div>
<svg style="left:15px;top:480px" width="9" height="6" viewBox="0 0 9 6"><path d="M0.7 0.7L4.5 4.5L8.3 0.7" stroke="#303030" stroke-width="1.6" fill="none"/></svg>
<div class="t" style="left:34px;top:477px;font-size:13px;font-weight:bold;letter-spacing:0.2px;color:#000">General Info</div>
<div class="ab" style="left:30px;top:491px;width:96px;height:16px;background:#f0f0f0"></div>
<div class="ab" style="left:127px;top:491px;width:128px;height:16px;background:#fff"></div>
<div class="ab" style="left:30px;top:507px;width:225px;height:1px;background:#e8e8e8"></div>
<div class="ab" style="left:126px;top:491px;width:1px;height:17px;background:#e8e8e8"></div>
<div class="t" style="left:34px;top:495px;font-size:12.5px;color:#6d6d6d">Folder Name</div>
<div class="ab" style="left:127px;top:491px;width:128px;height:17px;overflow:hidden"><div class="t" style="left:3px;top:4px;font-size:12.5px;color:#6d6d6d">Al-Mg phase diagram\Table</div></div>
<div class="ab" style="left:30px;top:508px;width:96px;height:16px;background:#fff"></div>
<div class="ab" style="left:127px;top:508px;width:128px;height:16px;background:#fff"></div>
<div class="ab" style="left:30px;top:524px;width:225px;height:1px;background:#e8e8e8"></div>
<div class="ab" style="left:126px;top:508px;width:1px;height:17px;background:#e8e8e8"></div>
<div class="t" style="left:34px;top:512px;font-size:12.5px;color:#6d6d6d">Path</div>
<div class="ab" style="left:127px;top:508px;width:128px;height:17px;overflow:hidden"><div class="t" style="left:3px;top:4px;font-size:12.5px;color:#6d6d6d">C:\Users\fanzh\Documents</div></div>
<div class="ab" style="left:30px;top:525px;width:225px;height:17px;background:#f0f0f0"></div>
<svg style="left:15px;top:531px" width="9" height="6" viewBox="0 0 9 6"><path d="M0.7 0.7L4.5 4.5L8.3 0.7" stroke="#303030" stroke-width="1.6" fill="none"/></svg>
<div class="t" style="left:34px;top:528px;font-size:13px;font-weight:bold;letter-spacing:0.2px;color:#000">Table Columns</div>
<div class="ab" style="left:30px;top:542px;width:96px;height:16px;background:#fff"></div>
<div class="ab" style="left:127px;top:542px;width:128px;height:16px;background:#fff"></div>
<div class="ab" style="left:30px;top:558px;width:225px;height:1px;background:#e8e8e8"></div>
<div class="ab" style="left:126px;top:542px;width:1px;height:17px;background:#e8e8e8"></div>
<div class="t" style="left:34px;top:546px;font-size:12.5px;color:#6d6d6d">T</div>
<div class="ab" style="left:127px;top:542px;width:128px;height:17px;overflow:hidden"><div class="t" style="left:3px;top:4px;font-size:12.5px;color:#6d6d6d">C</div></div>
<div class="ab" style="left:30px;top:559px;width:96px;height:16px;background:#fff"></div>
<div class="ab" style="left:127px;top:559px;width:128px;height:16px;background:#fff"></div>
<div class="ab" style="left:30px;top:575px;width:225px;height:1px;background:#e8e8e8"></div>
<div class="ab" style="left:126px;top:559px;width:1px;height:17px;background:#e8e8e8"></div>
<div class="t" style="left:34px;top:563px;font-size:12.5px;color:#6d6d6d">reaction</div>
<div class="ab" style="left:127px;top:559px;width:128px;height:17px;overflow:hidden"><div class="t" style="left:3px;top:4px;font-size:12.5px;color:#6d6d6d"></div></div>
<div class="ab" style="left:30px;top:576px;width:96px;height:16px;background:#fff"></div>
<div class="ab" style="left:127px;top:576px;width:128px;height:16px;background:#fff"></div>
<div class="ab" style="left:30px;top:592px;width:225px;height:1px;background:#e8e8e8"></div>
<div class="ab" style="left:126px;top:576px;width:1px;height:17px;background:#e8e8e8"></div>
<div class="t" style="left:34px;top:580px;font-size:12.5px;color:#6d6d6d">phase_name</div>
<div class="ab" style="left:127px;top:576px;width:128px;height:17px;overflow:hidden"><div class="t" style="left:3px;top:4px;font-size:12.5px;color:#6d6d6d"></div></div>
<div class="ab" style="left:30px;top:593px;width:96px;height:16px;background:#fff"></div>
<div class="ab" style="left:127px;top:593px;width:128px;height:16px;background:#fff"></div>
<div class="ab" style="left:30px;top:609px;width:225px;height:1px;background:#e8e8e8"></div>
<div class="ab" style="left:126px;top:593px;width:1px;height:17px;background:#e8e8e8"></div>
<div class="t" style="left:34px;top:597px;font-size:12.5px;color:#6d6d6d">x(Al)</div>
<div class="ab" style="left:127px;top:593px;width:128px;height:17px;overflow:hidden"><div class="t" style="left:3px;top:4px;font-size:12.5px;color:#6d6d6d">mole/mole</div></div>
<div class="ab" style="left:30px;top:610px;width:96px;height:16px;background:#fff"></div>
<div class="ab" style="left:127px;top:610px;width:128px;height:16px;background:#fff"></div>
<div class="ab" style="left:30px;top:626px;width:225px;height:1px;background:#e8e8e8"></div>
<div class="ab" style="left:126px;top:610px;width:1px;height:17px;background:#e8e8e8"></div>
<div class="t" style="left:34px;top:614px;font-size:12.5px;color:#6d6d6d">x(Mg)</div>
<div class="ab" style="left:127px;top:610px;width:128px;height:17px;overflow:hidden"><div class="t" style="left:3px;top:4px;font-size:12.5px;color:#6d6d6d">mole/mole</div></div>
<div class="ab" style="left:30px;top:627px;width:96px;height:16px;background:#fff"></div>
<div class="ab" style="left:127px;top:627px;width:128px;height:16px;background:#fff"></div>
<div class="ab" style="left:30px;top:643px;width:225px;height:1px;background:#e8e8e8"></div>
<div class="ab" style="left:126px;top:627px;width:1px;height:17px;background:#e8e8e8"></div>
<div class="t" style="left:34px;top:631px;font-size:12.5px;color:#6d6d6d">w(Al)</div>
<div class="ab" style="left:127px;top:627px;width:128px;height:17px;overflow:hidden"><div class="t" style="left:3px;top:4px;font-size:12.5px;color:#6d6d6d">kg/kg</div></div>
<div class="ab" style="left:30px;top:644px;width:96px;height:16px;background:#fff"></div>
<div class="ab" style="left:127px;top:644px;width:128px;height:16px;background:#fff"></div>
<div class="ab" style="left:30px;top:660px;width:225px;height:1px;background:#e8e8e8"></div>
<div class="ab" style="left:126px;top:644px;width:1px;height:17px;background:#e8e8e8"></div>
<div class="t" style="left:34px;top:648px;font-size:12.5px;color:#6d6d6d">w(Mg)</div>
<div class="ab" style="left:127px;top:644px;width:128px;height:17px;overflow:hidden"><div class="t" style="left:3px;top:4px;font-size:12.5px;color:#6d6d6d">kg/kg</div></div>
<svg style="left:271px;top:88px" width="15" height="15" viewBox="0 0 15 15"><rect x="0.5" y="0.5" width="14" height="14" fill="#f4f4f4" stroke="#c8c8c8"/><path d="M5 1v13M9.5 1v13M1 5h13M1 9.5h13" stroke="#e0e6ee" stroke-width="0.8"/><path d="M4.0 11.100000000000001L11.100000000000001 4.2L13.3 6.3" stroke="#119a11" stroke-width="1" fill="none"/><path d="M1.8 8.3L5.2 6.1L10.200000000000001 11.3L13.3 8.3" stroke="#d41a1a" stroke-width="1" fill="none" stroke-dasharray="1.2 0.8"/><circle cx="4.0" cy="11.100000000000001" r="1.5" fill="#fff" stroke="#119a11" stroke-width="1.2"/><circle cx="11.100000000000001" cy="4.2" r="1.5" fill="#fff" stroke="#119a11" stroke-width="1.2"/><circle cx="5.2" cy="6.1" r="1.5" fill="#fff" stroke="#d41a1a" stroke-width="1.2"/><circle cx="10.200000000000001" cy="11.3" r="1.5" fill="#fff" stroke="#d41a1a" stroke-width="1.2"/></svg>
<div class="t" style="left:299px;top:90px;font-size:12px;color:#fff">2D_Al-Mg.graph</div>
<svg style="left:429px;top:89px" width="15" height="14" viewBox="0 0 15 14"><rect x="0.6" y="0.6" width="13.3" height="12.3" rx="1.5" fill="#fff" stroke="#1f7bc2" stroke-width="1.2"/><path d="M2.5 2.6h9.5" stroke="#f4b820" stroke-width="1.4"/><path d="M2.5 5h9.5M2.5 7.6h9.5M2.5 10.2h9.5" stroke="#a9c6e6" stroke-width="1.8"/><path d="M5.5 2v9.5M8.9 2v9.5" stroke="#fff" stroke-width="0.8"/></svg>
<div class="t" style="left:457px;top:90px;font-size:12px;color:#fff">invariant.table</div>
<div class="ab" style="left:567px;top:86px;width:187px;height:20px;background:linear-gradient(#fff5a0,#ffef9c 25%,#ffee9b)"></div>
<svg style="left:576px;top:89px" width="15" height="14" viewBox="0 0 15 14"><rect x="0.6" y="0.6" width="13.3" height="12.3" rx="1.5" fill="#fff" stroke="#1f7bc2" stroke-width="1.2"/><path d="M2.5 2.6h9.5" stroke="#f4b820" stroke-width="1.4"/><path d="M2.5 5h9.5M2.5 7.6h9.5M2.5 10.2h9.5" stroke="#a9c6e6" stroke-width="1.8"/><path d="M5.5 2v9.5M8.9 2v9.5" stroke="#fff" stroke-width="0.8"/></svg>
<div class="t" style="left:606px;top:90px;font-size:12px;color:#000">invariant_tieline.table</div>
<svg style="left:738px;top:91px" width="10" height="10" viewBox="0 0 10 10"><path d="M1 1L9 9M9 1L1 9" stroke="#807a60" stroke-width="1.5"/></svg>
<svg style="left:1074px;top:96px" width="9" height="5" viewBox="0 0 9 5"><path d="M0 0h9L4.5 5z" fill="#cfd4e0"/></svg>
<div class="ab" style="left:263px;top:105px;width:825px;height:2px;background:#ffee9b"></div>
<div class="ab" style="left:263px;top:107px;width:825px;height:650px;background:#9ba7c9"></div>
<div class="ab" style="left:264px;top:107px;width:823px;height:649px;background:#000"></div>
<div class="ab" style="left:265px;top:108px;width:821px;height:647px;background:#ababab;overflow:hidden" id="grid">
<div class="ab" style="left:0;top:0;width:821px;height:56px;background:#fff"></div>
<div class="ab" style="left:0;top:55px;width:821px;height:1px;background:#a0a0a0"></div>
<div class="ab" style="left:61px;top:0;width:1px;height:56px;background:#a0a0a0"></div>
<div class="t" style="left:62px;top:7px;width:102px;text-align:center;font-size:12.5px">T</div>
<div class="ab" style="left:63px;top:28px;width:98px;height:23px;background:#e1e1e1;border:1px solid #adadad"></div>
<div class="t" style="left:67px;top:35px;font-size:12.5px">C</div>
<svg style="left:148px;top:37px" width="9" height="6" viewBox="0 0 9 6"><path d="M0.5 0.7L4.5 4.7L8.5 0.7" stroke="#404040" stroke-width="1.1" fill="none"/></svg>
<div class="ab" style="left:161px;top:2px;width:1px;height:54px;background:#e4e4e4"></div>
<div class="t" style="left:162px;top:7px;width:202px;text-align:center;font-size:12.5px">reaction</div>
<div class="ab" style="left:361px;top:2px;width:1px;height:54px;background:#e4e4e4"></div>
<div class="t" style="left:362px;top:7px;width:202px;text-align:center;font-size:12.5px">phase_name</div>
<div class="ab" style="left:561px;top:2px;width:1px;height:54px;background:#e4e4e4"></div>
<div class="t" style="left:562px;top:7px;width:102px;text-align:center;font-size:12.5px">x(Al)</div>
<div class="ab" style="left:563px;top:28px;width:98px;height:23px;background:#e1e1e1;border:1px solid #adadad"></div>
<div class="t" style="left:567px;top:35px;font-size:12.5px">mole/mole</div>
<svg style="left:648px;top:37px" width="9" height="6" viewBox="0 0 9 6"><path d="M0.5 0.7L4.5 4.7L8.5 0.7" stroke="#404040" stroke-width="1.1" fill="none"/></svg>
<div class="ab" style="left:661px;top:2px;width:1px;height:54px;background:#e4e4e4"></div>
<div class="t" style="left:662px;top:7px;width:102px;text-align:center;font-size:12.5px">x(Mg)</div>
<div class="ab" style="left:663px;top:28px;width:98px;height:23px;background:#e1e1e1;border:1px solid #adadad"></div>
<div class="t" style="left:667px;top:35px;font-size:12.5px">mole/mole</div>
<svg style="left:748px;top:37px" width="9" height="6" viewBox="0 0 9 6"><path d="M0.5 0.7L4.5 4.7L8.5 0.7" stroke="#404040" stroke-width="1.1" fill="none"/></svg>
<div class="ab" style="left:761px;top:2px;width:1px;height:54px;background:#e4e4e4"></div>
<div class="t" style="left:762px;top:7px;width:102px;text-align:center;font-size:12.5px">w(Al)</div>
<div class="ab" style="left:763px;top:28px;width:57px;height:23px;background:#e1e1e1;border:1px solid #adadad"></div>
<div class="t" style="left:767px;top:35px;font-size:12.5px">kg/kg</div>
<svg style="left:807px;top:37px" width="9" height="6" viewBox="0 0 9 6"><path d="M0.5 0.7L4.5 4.7L8.5 0.7" stroke="#404040" stroke-width="1.1" fill="none"/></svg>
<div class="ab" style="left:0;top:56px;width:61px;height:22px;background:#fff"></div>
<div class="ab" style="left:2px;top:77px;width:59px;height:1px;background:#e0e0e0"></div>
<div class="ab" style="left:61px;top:56px;width:1px;height:22px;background:#a0a0a0"></div>
<div class="t" style="left:28px;top:64px;font-size:12.2px">1</div>
<div class="ab" style="left:62px;top:56px;width:759px;height:21px;background:#f0f8ff"></div>
<div class="ab" style="left:62px;top:77px;width:759px;height:1px;background:#a0a0a0"></div>
<div class="ab" style="left:161px;top:56px;width:1px;height:22px;background:#a0a0a0"></div>
<div class="ab" style="left:361px;top:56px;width:1px;height:22px;background:#a0a0a0"></div>
<div class="ab" style="left:561px;top:56px;width:1px;height:22px;background:#a0a0a0"></div>
<div class="ab" style="left:661px;top:56px;width:1px;height:22px;background:#a0a0a0"></div>
<div class="ab" style="left:761px;top:56px;width:1px;height:22px;background:#a0a0a0"></div>
<div class="t" style="left:65px;top:62px;font-size:12.35px">450.4672</div>
<div class="t" style="left:165px;top:62px;font-size:12.3px">Liquid => Fcc + AlMg_Beta</div>
<div class="t" style="left:365px;top:62px;font-size:12.3px">Liquid</div>
<div class="t" style="left:565px;top:62px;font-size:12.35px">0.637666</div>
<div class="t" style="left:665px;top:62px;font-size:12.35px">0.362334</div>
<div class="t" style="left:765px;top:62px;font-size:12.35px">0.661444</div>
<div class="ab" style="left:0;top:78px;width:61px;height:22px;background:#fff"></div>
<div class="ab" style="left:2px;top:99px;width:59px;height:1px;background:#e0e0e0"></div>
<div class="ab" style="left:61px;top:78px;width:1px;height:22px;background:#a0a0a0"></div>
<div class="t" style="left:28px;top:86px;font-size:12.2px">2</div>
<div class="ab" style="left:62px;top:78px;width:759px;height:21px;background:#f0f8ff"></div>
<div class="ab" style="left:62px;top:99px;width:759px;height:1px;background:#a0a0a0"></div>
<div class="ab" style="left:161px;top:78px;width:1px;height:22px;background:#a0a0a0"></div>
<div class="ab" style="left:361px;top:78px;width:1px;height:22px;background:#a0a0a0"></div>
<div class="ab" style="left:561px;top:78px;width:1px;height:22px;background:#a0a0a0"></div>
<div class="ab" style="left:661px;top:78px;width:1px;height:22px;background:#a0a0a0"></div>
<div class="ab" style="left:761px;top:78px;width:1px;height:22px;background:#a0a0a0"></div>
<div class="t" style="left:65px;top:84px;font-size:12.35px">450.4672</div>
<div class="t" style="left:165px;top:84px;font-size:12.3px">Liquid => Fcc + AlMg_Beta</div>
<div class="t" style="left:365px;top:84px;font-size:12.3px">Fcc</div>
<div class="t" style="left:565px;top:84px;font-size:12.35px">0.834154</div>
<div class="t" style="left:665px;top:84px;font-size:12.35px">0.165846</div>
<div class="t" style="left:765px;top:84px;font-size:12.35px">0.848109</div>
<div class="ab" style="left:0;top:100px;width:61px;height:22px;background:#fff"></div>
<div class="ab" style="left:2px;top:121px;width:59px;height:1px;background:#e0e0e0"></div>
<div class="ab" style="left:61px;top:100px;width:1px;height:22px;background:#a0a0a0"></div>
<div class="t" style="left:28px;top:108px;font-size:12.2px">3</div>
<div class="ab" style="left:62px;top:100px;width:759px;height:21px;background:#f0f8ff"></div>
<div class="ab" style="left:62px;top:121px;width:759px;height:1px;background:#a0a0a0"></div>
<div class="ab" style="left:161px;top:100px;width:1px;height:22px;background:#a0a0a0"></div>
<div class="ab" style="left:361px;top:100px;width:1px;height:22px;background:#a0a0a0"></div>
<div class="ab" style="left:561px;top:100px;width:1px;height:22px;background:#a0a0a0"></div>
<div class="ab" style="left:661px;top:100px;width:1px;height:22px;background:#a0a0a0"></div>
<div class="ab" style="left:761px;top:100px;width:1px;height:22px;background:#a0a0a0"></div>
<div class="t" style="left:65px;top:106px;font-size:12.35px">450.4672</div>
<div class="t" style="left:165px;top:106px;font-size:12.3px">Liquid => Fcc + AlMg_Beta</div>
<div class="t" style="left:365px;top:106px;font-size:12.3px">AlMg_Beta</div>
<div class="t" style="left:565px;top:106px;font-size:12.35px">0.611354</div>
<div class="t" style="left:665px;top:106px;font-size:12.35px">0.388646</div>
<div class="t" style="left:765px;top:106px;font-size:12.35px">0.635872</div>
<div class="ab" style="left:0;top:122px;width:61px;height:22px;background:#fff"></div>
<div class="ab" style="left:2px;top:143px;width:59px;height:1px;background:#e0e0e0"></div>
<div class="ab" style="left:61px;top:122px;width:1px;height:22px;background:#a0a0a0"></div>
<div class="t" style="left:28px;top:130px;font-size:12.2px">4</div>
<div class="ab" style="left:62px;top:122px;width:759px;height:21px;background:#f0f8ff"></div>
<div class="ab" style="left:62px;top:143px;width:759px;height:1px;background:#a0a0a0"></div>
<div class="ab" style="left:161px;top:122px;width:1px;height:22px;background:#a0a0a0"></div>
<div class="ab" style="left:361px;top:122px;width:1px;height:22px;background:#a0a0a0"></div>
<div class="ab" style="left:561px;top:122px;width:1px;height:22px;background:#a0a0a0"></div>
<div class="ab" style="left:661px;top:122px;width:1px;height:22px;background:#a0a0a0"></div>
<div class="ab" style="left:761px;top:122px;width:1px;height:22px;background:#a0a0a0"></div>
<div class="t" style="left:65px;top:128px;font-size:12.35px">450.4672</div>
<div class="t" style="left:165px;top:128px;font-size:12.3px">Liquid => Fcc + AlMg_Beta</div>
<div class="t" style="left:365px;top:128px;font-size:12.3px">Liquid</div>
<div class="t" style="left:565px;top:128px;font-size:12.35px">0.637666</div>
<div class="t" style="left:665px;top:128px;font-size:12.35px">0.362334</div>
<div class="t" style="left:765px;top:128px;font-size:12.35px">0.661444</div>
<div class="ab" style="left:0;top:144px;width:61px;height:22px;background:#fff"></div>
<div class="ab" style="left:2px;top:165px;width:59px;height:1px;background:#e0e0e0"></div>
<div class="ab" style="left:61px;top:144px;width:1px;height:22px;background:#a0a0a0"></div>
<div class="t" style="left:28px;top:152px;font-size:12.2px">5</div>
<div class="ab" style="left:62px;top:144px;width:759px;height:21px;background:#fff"></div>
<div class="ab" style="left:62px;top:165px;width:759px;height:1px;background:#a0a0a0"></div>
<div class="ab" style="left:161px;top:144px;width:1px;height:22px;background:#a0a0a0"></div>
<div class="ab" style="left:361px;top:144px;width:1px;height:22px;background:#a0a0a0"></div>
<div class="ab" style="left:561px;top:144px;width:1px;height:22px;background:#a0a0a0"></div>
<div class="ab" style="left:661px;top:144px;width:1px;height:22px;background:#a0a0a0"></div>
<div class="ab" style="left:761px;top:144px;width:1px;height:22px;background:#a0a0a0"></div>
<div class="ab" style="left:0;top:166px;width:61px;height:22px;background:#fff"></div>
<div class="ab" style="left:2px;top:187px;width:59px;height:1px;background:#e0e0e0"></div>
<div class="ab" style="left:61px;top:166px;width:1px;height:22px;background:#a0a0a0"></div>
<div class="t" style="left:28px;top:174px;font-size:12.2px">6</div>
<div class="ab" style="left:62px;top:166px;width:759px;height:21px;background:#ffc0cb"></div>
<div class="ab" style="left:62px;top:187px;width:759px;height:1px;background:#a0a0a0"></div>
<div class="ab" style="left:161px;top:166px;width:1px;height:22px;background:#a0a0a0"></div>
<div class="ab" style="left:361px;top:166px;width:1px;height:22px;background:#a0a0a0"></div>
<div class="ab" style="left:561px;top:166px;width:1px;height:22px;background:#a0a0a0"></div>
<div class="ab" style="left:661px;top:166px;width:1px;height:22px;background:#a0a0a0"></div>
<div class="ab" style="left:761px;top:166px;width:1px;height:22px;background:#a0a0a0"></div>
<div class="t" style="left:65px;top:172px;font-size:12.35px">449.5016</div>
<div class="t" style="left:165px;top:172px;font-size:12.3px">Liquid => AlMg_Beta + AlMg_Ga...</div>
<div class="t" style="left:365px;top:172px;font-size:12.3px">Liquid</div>
<div class="t" style="left:565px;top:172px;font-size:12.35px">0.576044</div>
<div class="t" style="left:665px;top:172px;font-size:12.35px">0.423956</div>
<div class="t" style="left:765px;top:172px;font-size:12.35px">0.601337</div>
<div class="ab" style="left:0;top:188px;width:61px;height:22px;background:#fff"></div>
<div class="ab" style="left:2px;top:209px;width:59px;height:1px;background:#e0e0e0"></div>
<div class="ab" style="left:61px;top:188px;width:1px;height:22px;background:#a0a0a0"></div>
<div class="t" style="left:28px;top:196px;font-size:12.2px">7</div>
<div class="ab" style="left:62px;top:188px;width:759px;height:21px;background:#ffc0cb"></div>
<div class="ab" style="left:62px;top:209px;width:759px;height:1px;background:#a0a0a0"></div>
<div class="ab" style="left:161px;top:188px;width:1px;height:22px;background:#a0a0a0"></div>
<div class="ab" style="left:361px;top:188px;width:1px;height:22px;background:#a0a0a0"></div>
<div class="ab" style="left:561px;top:188px;width:1px;height:22px;background:#a0a0a0"></div>
<div class="ab" style="left:661px;top:188px;width:1px;height:22px;background:#a0a0a0"></div>
<div class="ab" style="left:761px;top:188px;width:1px;height:22px;background:#a0a0a0"></div>
<div class="t" style="left:65px;top:194px;font-size:12.35px">449.5016</div>
<div class="t" style="left:165px;top:194px;font-size:12.3px">Liquid => AlMg_Beta + AlMg_Ga...</div>
<div class="t" style="left:365px;top:194px;font-size:12.3px">AlMg_Beta</div>
<div class="t" style="left:565px;top:194px;font-size:12.35px">0.611354</div>
<div class="t" style="left:665px;top:194px;font-size:12.35px">0.388646</div>
<div class="t" style="left:765px;top:194px;font-size:12.35px">0.635872</div>
<div class="ab" style="left:0;top:210px;width:61px;height:22px;background:#fff"></div>
<div class="ab" style="left:2px;top:231px;width:59px;height:1px;background:#e0e0e0"></div>
<div class="ab" style="left:61px;top:210px;width:1px;height:22px;background:#a0a0a0"></div>
<div class="t" style="left:28px;top:218px;font-size:12.2px">8</div>
<div class="ab" style="left:62px;top:210px;width:759px;height:21px;background:#ffc0cb"></div>
<div class="ab" style="left:62px;top:231px;width:759px;height:1px;background:#a0a0a0"></div>
<div class="ab" style="left:161px;top:210px;width:1px;height:22px;background:#a0a0a0"></div>
<div class="ab" style="left:361px;top:210px;width:1px;height:22px;background:#a0a0a0"></div>
<div class="ab" style="left:561px;top:210px;width:1px;height:22px;background:#a0a0a0"></div>
<div class="ab" style="left:661px;top:210px;width:1px;height:22px;background:#a0a0a0"></div>
<div class="ab" style="left:761px;top:210px;width:1px;height:22px;background:#a0a0a0"></div>
<div class="t" style="left:65px;top:216px;font-size:12.35px">449.5016</div>
<div class="t" style="left:165px;top:216px;font-size:12.3px">Liquid => AlMg_Beta + AlMg_Ga...</div>
<div class="t" style="left:365px;top:216px;font-size:12.3px">AlMg_Gamma</div>
<div class="t" style="left:565px;top:216px;font-size:12.35px">0.519503</div>
<div class="t" style="left:665px;top:216px;font-size:12.35px">0.480497</div>
<div class="t" style="left:765px;top:216px;font-size:12.35px">0.545508</div>
<div class="ab" style="left:0;top:232px;width:61px;height:22px;background:#fff"></div>
<div class="ab" style="left:2px;top:253px;width:59px;height:1px;background:#e0e0e0"></div>
<div class="ab" style="left:61px;top:232px;width:1px;height:22px;background:#a0a0a0"></div>
<div class="t" style="left:28px;top:240px;font-size:12.2px">9</div>
<div class="ab" style="left:62px;top:232px;width:759px;height:21px;background:#ffc0cb"></div>
<div class="ab" style="left:62px;top:253px;width:759px;height:1px;background:#a0a0a0"></div>
<div class="ab" style="left:161px;top:232px;width:1px;height:22px;background:#a0a0a0"></div>
<div class="ab" style="left:361px;top:232px;width:1px;height:22px;background:#a0a0a0"></div>
<div class="ab" style="left:561px;top:232px;width:1px;height:22px;background:#a0a0a0"></div>
<div class="ab" style="left:661px;top:232px;width:1px;height:22px;background:#a0a0a0"></div>
<div class="ab" style="left:761px;top:232px;width:1px;height:22px;background:#a0a0a0"></div>
<div class="t" style="left:65px;top:238px;font-size:12.35px">449.5016</div>
<div class="t" style="left:165px;top:238px;font-size:12.3px">Liquid => AlMg_Beta + AlMg_Ga...</div>
<div class="t" style="left:365px;top:238px;font-size:12.3px">Liquid</div>
<div class="t" style="left:565px;top:238px;font-size:12.35px">0.576044</div>
<div class="t" style="left:665px;top:238px;font-size:12.35px">0.423956</div>
<div class="t" style="left:765px;top:238px;font-size:12.35px">0.601337</div>
<div class="ab" style="left:0;top:254px;width:61px;height:22px;background:#fff"></div>
<div class="ab" style="left:2px;top:275px;width:59px;height:1px;background:#e0e0e0"></div>
<div class="ab" style="left:61px;top:254px;width:1px;height:22px;background:#a0a0a0"></div>
<div class="t" style="left:28px;top:262px;font-size:12.2px">10</div>
<div class="ab" style="left:62px;top:254px;width:759px;height:21px;background:#fff"></div>
<div class="ab" style="left:62px;top:275px;width:759px;height:1px;background:#a0a0a0"></div>
<div class="ab" style="left:161px;top:254px;width:1px;height:22px;background:#a0a0a0"></div>
<div class="ab" style="left:361px;top:254px;width:1px;height:22px;background:#a0a0a0"></div>
<div class="ab" style="left:561px;top:254px;width:1px;height:22px;background:#a0a0a0"></div>
<div class="ab" style="left:661px;top:254px;width:1px;height:22px;background:#a0a0a0"></div>
<div class="ab" style="left:761px;top:254px;width:1px;height:22px;background:#a0a0a0"></div>
<div class="ab" style="left:0;top:276px;width:61px;height:22px;background:#fff"></div>
<div class="ab" style="left:2px;top:297px;width:59px;height:1px;background:#e0e0e0"></div>
<div class="ab" style="left:61px;top:276px;width:1px;height:22px;background:#a0a0a0"></div>
<div class="t" style="left:28px;top:284px;font-size:12.2px">11</div>
<div class="ab" style="left:62px;top:276px;width:759px;height:21px;background:#f5f5dc"></div>
<div class="ab" style="left:62px;top:297px;width:759px;height:1px;background:#a0a0a0"></div>
<div class="ab" style="left:161px;top:276px;width:1px;height:22px;background:#a0a0a0"></div>
<div class="ab" style="left:361px;top:276px;width:1px;height:22px;background:#a0a0a0"></div>
<div class="ab" style="left:561px;top:276px;width:1px;height:22px;background:#a0a0a0"></div>
<div class="ab" style="left:661px;top:276px;width:1px;height:22px;background:#a0a0a0"></div>
<div class="ab" style="left:761px;top:276px;width:1px;height:22px;background:#a0a0a0"></div>
<div class="t" style="left:65px;top:282px;font-size:12.35px">436.2780</div>
<div class="t" style="left:165px;top:282px;font-size:12.3px">Liquid => AlMg_Gamma + Hcp</div>
<div class="t" style="left:365px;top:282px;font-size:12.3px">Liquid</div>
<div class="t" style="left:565px;top:282px;font-size:12.35px">0.310102</div>
<div class="t" style="left:665px;top:282px;font-size:12.35px">0.689898</div>
<div class="t" style="left:765px;top:282px;font-size:12.35px">0.332888</div>
<div class="ab" style="left:0;top:298px;width:61px;height:22px;background:#fff"></div>
<div class="ab" style="left:2px;top:319px;width:59px;height:1px;background:#e0e0e0"></div>
<div class="ab" style="left:61px;top:298px;width:1px;height:22px;background:#a0a0a0"></div>
<div class="t" style="left:28px;top:306px;font-size:12.2px">12</div>
<div class="ab" style="left:62px;top:298px;width:759px;height:21px;background:#f5f5dc"></div>
<div class="ab" style="left:62px;top:319px;width:759px;height:1px;background:#a0a0a0"></div>
<div class="ab" style="left:161px;top:298px;width:1px;height:22px;background:#a0a0a0"></div>
<div class="ab" style="left:361px;top:298px;width:1px;height:22px;background:#a0a0a0"></div>
<div class="ab" style="left:561px;top:298px;width:1px;height:22px;background:#a0a0a0"></div>
<div class="ab" style="left:661px;top:298px;width:1px;height:22px;background:#a0a0a0"></div>
<div class="ab" style="left:761px;top:298px;width:1px;height:22px;background:#a0a0a0"></div>
<div class="t" style="left:65px;top:304px;font-size:12.35px">436.2780</div>
<div class="t" style="left:165px;top:304px;font-size:12.3px">Liquid => AlMg_Gamma + Hcp</div>
<div class="t" style="left:365px;top:304px;font-size:12.3px">AlMg_Gamma</div>
<div class="t" style="left:565px;top:304px;font-size:12.35px">0.399399</div>
<div class="t" style="left:665px;top:304px;font-size:12.35px">0.600601</div>
<div class="t" style="left:765px;top:304px;font-size:12.35px">0.424707</div>
<div class="ab" style="left:0;top:320px;width:61px;height:22px;background:#fff"></div>
<div class="ab" style="left:2px;top:341px;width:59px;height:1px;background:#e0e0e0"></div>
<div class="ab" style="left:61px;top:320px;width:1px;height:22px;background:#a0a0a0"></div>
<div class="t" style="left:28px;top:328px;font-size:12.2px">13</div>
<div class="ab" style="left:62px;top:320px;width:759px;height:21px;background:#f5f5dc"></div>
<div class="ab" style="left:62px;top:341px;width:759px;height:1px;background:#a0a0a0"></div>
<div class="ab" style="left:161px;top:320px;width:1px;height:22px;background:#a0a0a0"></div>
<div class="ab" style="left:361px;top:320px;width:1px;height:22px;background:#a0a0a0"></div>
<div class="ab" style="left:561px;top:320px;width:1px;height:22px;background:#a0a0a0"></div>
<div class="ab" style="left:661px;top:320px;width:1px;height:22px;background:#a0a0a0"></div>
<div class="ab" style="left:761px;top:320px;width:1px;height:22px;background:#a0a0a0"></div>
<div class="t" style="left:65px;top:326px;font-size:12.35px">436.2780</div>
<div class="t" style="left:165px;top:326px;font-size:12.3px">Liquid => AlMg_Gamma + Hcp</div>
<div class="t" style="left:365px;top:326px;font-size:12.3px">Hcp</div>
<div class="t" style="left:565px;top:326px;font-size:12.35px">0.115955</div>
<div class="t" style="left:665px;top:326px;font-size:12.35px">0.884045</div>
<div class="t" style="left:765px;top:326px;font-size:12.35px">0.127103</div>
<div class="ab" style="left:0;top:342px;width:61px;height:22px;background:#fff"></div>
<div class="ab" style="left:2px;top:363px;width:59px;height:1px;background:#e0e0e0"></div>
<div class="ab" style="left:61px;top:342px;width:1px;height:22px;background:#a0a0a0"></div>
<div class="t" style="left:28px;top:350px;font-size:12.2px">14</div>
<div class="ab" style="left:62px;top:342px;width:759px;height:21px;background:#f5f5dc"></div>
<div class="ab" style="left:62px;top:363px;width:759px;height:1px;background:#a0a0a0"></div>
<div class="ab" style="left:161px;top:342px;width:1px;height:22px;background:#a0a0a0"></div>
<div class="ab" style="left:361px;top:342px;width:1px;height:22px;background:#a0a0a0"></div>
<div class="ab" style="left:561px;top:342px;width:1px;height:22px;background:#a0a0a0"></div>
<div class="ab" style="left:661px;top:342px;width:1px;height:22px;background:#a0a0a0"></div>
<div class="ab" style="left:761px;top:342px;width:1px;height:22px;background:#a0a0a0"></div>
<div class="t" style="left:65px;top:348px;font-size:12.35px">436.2780</div>
<div class="t" style="left:165px;top:348px;font-size:12.3px">Liquid => AlMg_Gamma + Hcp</div>
<div class="t" style="left:365px;top:348px;font-size:12.3px">Liquid</div>
<div class="t" style="left:565px;top:348px;font-size:12.35px">0.310102</div>
<div class="t" style="left:665px;top:348px;font-size:12.35px">0.689898</div>
<div class="t" style="left:765px;top:348px;font-size:12.35px">0.332888</div>
<div class="ab" style="left:0;top:364px;width:61px;height:22px;background:#fff"></div>
<div class="ab" style="left:2px;top:385px;width:59px;height:1px;background:#e0e0e0"></div>
<div class="ab" style="left:61px;top:364px;width:1px;height:22px;background:#a0a0a0"></div>
<div class="t" style="left:28px;top:372px;font-size:12.2px">15</div>
<div class="ab" style="left:62px;top:364px;width:759px;height:21px;background:#fff"></div>
<div class="ab" style="left:62px;top:385px;width:759px;height:1px;background:#a0a0a0"></div>
<div class="ab" style="left:161px;top:364px;width:1px;height:22px;background:#a0a0a0"></div>
<div class="ab" style="left:361px;top:364px;width:1px;height:22px;background:#a0a0a0"></div>
<div class="ab" style="left:561px;top:364px;width:1px;height:22px;background:#a0a0a0"></div>
<div class="ab" style="left:661px;top:364px;width:1px;height:22px;background:#a0a0a0"></div>
<div class="ab" style="left:761px;top:364px;width:1px;height:22px;background:#a0a0a0"></div>
<div class="ab" style="left:0;top:386px;width:61px;height:22px;background:#fff"></div>
<div class="ab" style="left:2px;top:407px;width:59px;height:1px;background:#e0e0e0"></div>
<div class="ab" style="left:61px;top:386px;width:1px;height:22px;background:#a0a0a0"></div>
<div class="t" style="left:28px;top:394px;font-size:12.2px">16</div>
<div class="ab" style="left:62px;top:386px;width:759px;height:21px;background:#d2b48c"></div>
<div class="ab" style="left:62px;top:407px;width:759px;height:1px;background:#a0a0a0"></div>
<div class="ab" style="left:161px;top:386px;width:1px;height:22px;background:#a0a0a0"></div>
<div class="ab" style="left:361px;top:386px;width:1px;height:22px;background:#a0a0a0"></div>
<div class="ab" style="left:561px;top:386px;width:1px;height:22px;background:#a0a0a0"></div>
<div class="ab" style="left:661px;top:386px;width:1px;height:22px;background:#a0a0a0"></div>
<div class="ab" style="left:761px;top:386px;width:1px;height:22px;background:#a0a0a0"></div>
<div class="t" style="left:65px;top:392px;font-size:12.35px">409.7759</div>
<div class="t" style="left:165px;top:392px;font-size:12.3px">AlMg_Gamma + AlMg_Beta => Al...</div>
<div class="t" style="left:365px;top:392px;font-size:12.3px">AlMg_Gamma</div>
<div class="t" style="left:565px;top:392px;font-size:12.35px">0.505622</div>
<div class="t" style="left:665px;top:392px;font-size:12.35px">0.494378</div>
<div class="t" style="left:765px;top:392px;font-size:12.35px">0.531702</div>
<div class="ab" style="left:0;top:408px;width:61px;height:22px;background:#fff"></div>
<div class="ab" style="left:2px;top:429px;width:59px;height:1px;background:#e0e0e0"></div>
<div class="ab" style="left:61px;top:408px;width:1px;height:22px;background:#a0a0a0"></div>
<div class="t" style="left:28px;top:416px;font-size:12.2px">17</div>
<div class="ab" style="left:62px;top:408px;width:759px;height:21px;background:#d2b48c"></div>
<div class="ab" style="left:62px;top:429px;width:759px;height:1px;background:#a0a0a0"></div>
<div class="ab" style="left:161px;top:408px;width:1px;height:22px;background:#a0a0a0"></div>
<div class="ab" style="left:361px;top:408px;width:1px;height:22px;background:#a0a0a0"></div>
<div class="ab" style="left:561px;top:408px;width:1px;height:22px;background:#a0a0a0"></div>
<div class="ab" style="left:661px;top:408px;width:1px;height:22px;background:#a0a0a0"></div>
<div class="ab" style="left:761px;top:408px;width:1px;height:22px;background:#a0a0a0"></div>
<div class="t" style="left:65px;top:414px;font-size:12.35px">409.7759</div>
<div class="t" style="left:165px;top:414px;font-size:12.3px">AlMg_Gamma + AlMg_Beta => Al...</div>
<div class="t" style="left:365px;top:414px;font-size:12.3px">AlMg_Beta</div>
<div class="t" style="left:565px;top:414px;font-size:12.35px">0.611354</div>
<div class="t" style="left:665px;top:414px;font-size:12.35px">0.388646</div>
<div class="t" style="left:765px;top:414px;font-size:12.35px">0.635872</div>
<div class="ab" style="left:0;top:430px;width:61px;height:22px;background:#fff"></div>
<div class="ab" style="left:2px;top:451px;width:59px;height:1px;background:#e0e0e0"></div>
<div class="ab" style="left:61px;top:430px;width:1px;height:22px;background:#a0a0a0"></div>
<div class="t" style="left:28px;top:438px;font-size:12.2px">18</div>
<div class="ab" style="left:62px;top:430px;width:759px;height:21px;background:#d2b48c"></div>
<div class="ab" style="left:62px;top:451px;width:759px;height:1px;background:#a0a0a0"></div>
<div class="ab" style="left:161px;top:430px;width:1px;height:22px;background:#a0a0a0"></div>
<div class="ab" style="left:361px;top:430px;width:1px;height:22px;background:#a0a0a0"></div>
<div class="ab" style="left:561px;top:430px;width:1px;height:22px;background:#a0a0a0"></div>
<div class="ab" style="left:661px;top:430px;width:1px;height:22px;background:#a0a0a0"></div>
<div class="ab" style="left:761px;top:430px;width:1px;height:22px;background:#a0a0a0"></div>
<div class="t" style="left:65px;top:436px;font-size:12.35px">409.7759</div>
<div class="t" style="left:165px;top:436px;font-size:12.3px">AlMg_Gamma + AlMg_Beta => Al...</div>
<div class="t" style="left:365px;top:436px;font-size:12.3px">AlMg_Eps</div>
<div class="t" style="left:565px;top:436px;font-size:12.35px">0.566038</div>
<div class="t" style="left:665px;top:436px;font-size:12.35px">0.433962</div>
<div class="t" style="left:765px;top:436px;font-size:12.35px">0.591505</div>
<div class="ab" style="left:0;top:452px;width:61px;height:22px;background:#fff"></div>
<div class="ab" style="left:2px;top:473px;width:59px;height:1px;background:#e0e0e0"></div>
<div class="ab" style="left:61px;top:452px;width:1px;height:22px;background:#a0a0a0"></div>
<div class="t" style="left:28px;top:460px;font-size:12.2px">19</div>
<div class="ab" style="left:62px;top:452px;width:759px;height:21px;background:#d2b48c"></div>
<div class="ab" style="left:62px;top:473px;width:759px;height:1px;background:#a0a0a0"></div>
<div class="ab" style="left:161px;top:452px;width:1px;height:22px;background:#a0a0a0"></div>
<div class="ab" style="left:361px;top:452px;width:1px;height:22px;background:#a0a0a0"></div>
<div class="ab" style="left:561px;top:452px;width:1px;height:22px;background:#a0a0a0"></div>
<div class="ab" style="left:661px;top:452px;width:1px;height:22px;background:#a0a0a0"></div>
<div class="ab" style="left:761px;top:452px;width:1px;height:22px;background:#a0a0a0"></div>
<div class="t" style="left:65px;top:458px;font-size:12.35px">409.7759</div>
<div class="t" style="left:165px;top:458px;font-size:12.3px">AlMg_Gamma + AlMg_Beta => Al...</div>
<div class="t" style="left:365px;top:458px;font-size:12.3px">AlMg_Gamma</div>
<div class="t" style="left:565px;top:458px;font-size:12.35px">0.505622</div>
<div class="t" style="left:665px;top:458px;font-size:12.35px">0.494378</div>
<div class="t" style="left:765px;top:458px;font-size:12.35px">0.531702</div>
<div class="ab" style="left:0;top:474px;width:61px;height:22px;background:#fff"></div>
<div class="ab" style="left:2px;top:495px;width:59px;height:1px;background:#e0e0e0"></div>
<div class="ab" style="left:61px;top:474px;width:1px;height:22px;background:#a0a0a0"></div>
<div class="t" style="left:28px;top:482px;font-size:12.2px">20</div>
<div class="ab" style="left:62px;top:474px;width:759px;height:21px;background:#fff"></div>
<div class="ab" style="left:62px;top:495px;width:759px;height:1px;background:#a0a0a0"></div>
<div class="ab" style="left:161px;top:474px;width:1px;height:22px;background:#a0a0a0"></div>
<div class="ab" style="left:361px;top:474px;width:1px;height:22px;background:#a0a0a0"></div>
<div class="ab" style="left:561px;top:474px;width:1px;height:22px;background:#a0a0a0"></div>
<div class="ab" style="left:661px;top:474px;width:1px;height:22px;background:#a0a0a0"></div>
<div class="ab" style="left:761px;top:474px;width:1px;height:22px;background:#a0a0a0"></div>
<div class="ab" style="left:0;top:496px;width:61px;height:22px;background:#fff"></div>
<div class="ab" style="left:2px;top:517px;width:59px;height:1px;background:#e0e0e0"></div>
<div class="ab" style="left:61px;top:496px;width:1px;height:22px;background:#a0a0a0"></div>
<div class="t" style="left:28px;top:504px;font-size:12.2px">21</div>
<div class="ab" style="left:62px;top:496px;width:759px;height:21px;background:#90ee90"></div>
<div class="ab" style="left:62px;top:517px;width:759px;height:1px;background:#a0a0a0"></div>
<div class="ab" style="left:161px;top:496px;width:1px;height:22px;background:#a0a0a0"></div>
<div class="ab" style="left:361px;top:496px;width:1px;height:22px;background:#a0a0a0"></div>
<div class="ab" style="left:561px;top:496px;width:1px;height:22px;background:#a0a0a0"></div>
<div class="ab" style="left:661px;top:496px;width:1px;height:22px;background:#a0a0a0"></div>
<div class="ab" style="left:761px;top:496px;width:1px;height:22px;background:#a0a0a0"></div>
<div class="t" style="left:65px;top:502px;font-size:12.35px">250.0882</div>
<div class="t" style="left:165px;top:502px;font-size:12.3px">AlMg_Eps => AlMg_Gamma + Al...</div>
<div class="t" style="left:365px;top:502px;font-size:12.3px">AlMg_Gamma</div>
<div class="t" style="left:565px;top:502px;font-size:12.35px">0.463558</div>
<div class="t" style="left:665px;top:502px;font-size:12.35px">0.536442</div>
<div class="t" style="left:765px;top:502px;font-size:12.35px">0.489616</div>
<div class="ab" style="left:0;top:518px;width:61px;height:22px;background:#fff"></div>
<div class="ab" style="left:2px;top:539px;width:59px;height:1px;background:#e0e0e0"></div>
<div class="ab" style="left:61px;top:518px;width:1px;height:22px;background:#a0a0a0"></div>
<div class="t" style="left:28px;top:526px;font-size:12.2px">22</div>
<div class="ab" style="left:62px;top:518px;width:759px;height:21px;background:#90ee90"></div>
<div class="ab" style="left:62px;top:539px;width:759px;height:1px;background:#a0a0a0"></div>
<div class="ab" style="left:161px;top:518px;width:1px;height:22px;background:#a0a0a0"></div>
<div class="ab" style="left:361px;top:518px;width:1px;height:22px;background:#a0a0a0"></div>
<div class="ab" style="left:561px;top:518px;width:1px;height:22px;background:#a0a0a0"></div>
<div class="ab" style="left:661px;top:518px;width:1px;height:22px;background:#a0a0a0"></div>
<div class="ab" style="left:761px;top:518px;width:1px;height:22px;background:#a0a0a0"></div>
<div class="t" style="left:65px;top:524px;font-size:12.35px">250.0882</div>
<div class="t" style="left:165px;top:524px;font-size:12.3px">AlMg_Eps => AlMg_Gamma + Al...</div>
<div class="t" style="left:365px;top:524px;font-size:12.3px">AlMg_Eps</div>
<div class="t" style="left:565px;top:524px;font-size:12.35px">0.566038</div>
<div class="t" style="left:665px;top:524px;font-size:12.35px">0.433962</div>
<div class="t" style="left:765px;top:524px;font-size:12.35px">0.591505</div>
<div class="ab" style="left:0;top:540px;width:61px;height:22px;background:#fff"></div>
<div class="ab" style="left:2px;top:561px;width:59px;height:1px;background:#e0e0e0"></div>
<div class="ab" style="left:61px;top:540px;width:1px;height:22px;background:#a0a0a0"></div>
<div class="t" style="left:28px;top:548px;font-size:12.2px">23</div>
<div class="ab" style="left:62px;top:540px;width:759px;height:21px;background:#90ee90"></div>
<div class="ab" style="left:62px;top:561px;width:759px;height:1px;background:#a0a0a0"></div>
<div class="ab" style="left:161px;top:540px;width:1px;height:22px;background:#a0a0a0"></div>
<div class="ab" style="left:361px;top:540px;width:1px;height:22px;background:#a0a0a0"></div>
<div class="ab" style="left:561px;top:540px;width:1px;height:22px;background:#a0a0a0"></div>
<div class="ab" style="left:661px;top:540px;width:1px;height:22px;background:#a0a0a0"></div>
<div class="ab" style="left:761px;top:540px;width:1px;height:22px;background:#a0a0a0"></div>
<div class="t" style="left:65px;top:546px;font-size:12.35px">250.0882</div>
<div class="t" style="left:165px;top:546px;font-size:12.3px">AlMg_Eps => AlMg_Gamma + Al...</div>
<div class="t" style="left:365px;top:546px;font-size:12.3px">AlMg_Beta</div>
<div class="t" style="left:565px;top:546px;font-size:12.35px">0.611354</div>
<div class="t" style="left:665px;top:546px;font-size:12.35px">0.388646</div>
<div class="t" style="left:765px;top:546px;font-size:12.35px">0.635872</div>
<div class="ab" style="left:0;top:562px;width:61px;height:22px;background:#fff"></div>
<div class="ab" style="left:2px;top:583px;width:59px;height:1px;background:#e0e0e0"></div>
<div class="ab" style="left:61px;top:562px;width:1px;height:22px;background:#a0a0a0"></div>
<div class="t" style="left:28px;top:570px;font-size:12.2px">24</div>
<div class="ab" style="left:62px;top:562px;width:759px;height:21px;background:#90ee90"></div>
<div class="ab" style="left:62px;top:583px;width:759px;height:1px;background:#a0a0a0"></div>
<div class="ab" style="left:161px;top:562px;width:1px;height:22px;background:#a0a0a0"></div>
<div class="ab" style="left:361px;top:562px;width:1px;height:22px;background:#a0a0a0"></div>
<div class="ab" style="left:561px;top:562px;width:1px;height:22px;background:#a0a0a0"></div>
<div class="ab" style="left:661px;top:562px;width:1px;height:22px;background:#a0a0a0"></div>
<div class="ab" style="left:761px;top:562px;width:1px;height:22px;background:#a0a0a0"></div>
<div class="t" style="left:65px;top:568px;font-size:12.35px">250.0882</div>
<div class="t" style="left:165px;top:568px;font-size:12.3px">AlMg_Eps => AlMg_Gamma + Al...</div>
<div class="t" style="left:365px;top:568px;font-size:12.3px">AlMg_Gamma</div>
<div class="t" style="left:565px;top:568px;font-size:12.35px">0.463558</div>
<div class="t" style="left:665px;top:568px;font-size:12.35px">0.536442</div>
<div class="t" style="left:765px;top:568px;font-size:12.35px">0.489616</div>
<div class="ab" style="left:62px;top:56px;width:99px;height:21px;background:#0078d7"></div>
<div class="t" style="left:65px;top:62px;font-size:12.35px;color:#fff">450.4672</div>
<svg style="left:7px;top:63px" width="5" height="9" viewBox="0 0 5 9"><path d="M0 0L5 4.5L0 9z" fill="#3a3a3a"/></svg>
<div class="ab" style="left:0;top:630px;width:821px;height:17px;background:#fff"></div>
<div class="ab" style="left:0;top:631px;width:821px;height:15px;background:#f0f0f0"></div>
<div class="ab" style="left:17px;top:631px;width:663px;height:15px;background:#cdcdcd"></div>
<svg style="left:5px;top:635px" width="7" height="8" viewBox="0 0 7 8"><path d="M6 0.8L2 4L6 7.2" stroke="#4a4a4a" stroke-width="2.1" fill="none"/></svg>
<svg style="left:809px;top:635px" width="7" height="8" viewBox="0 0 7 8"><path d="M1 0.8L5 4L1 7.2" stroke="#4a4a4a" stroke-width="2.1" fill="none"/></svg>
</div>
<div class="ab" style="left:0;top:763px;width:1095px;height:23px;background:#007acc"></div>
<div class="ab" style="left:1087px;top:772px;width:1px;height:1px;background:#0a3a66"></div>
<div class="ab" style="left:1085px;top:774px;width:1px;height:1px;background:#0a3a66"></div>
<div class="ab" style="left:1087px;top:774px;width:1px;height:1px;background:#0a3a66"></div>
<div class="ab" style="left:1083px;top:776px;width:1px;height:1px;background:#0a3a66"></div>
<div class="ab" style="left:1085px;top:776px;width:1px;height:1px;background:#0a3a66"></div>
<div class="ab" style="left:1087px;top:776px;width:1px;height:1px;background:#0a3a66"></div>
<div class="ab" style="left:1081px;top:778px;width:1px;height:1px;background:#0a3a66"></div>
<div class="ab" style="left:1083px;top:778px;width:1px;height:1px;background:#0a3a66"></div>
<div class="ab" style="left:1085px;top:778px;width:1px;height:1px;background:#0a3a66"></div>
<div class="ab" style="left:1087px;top:778px;width:1px;height:1px;background:#0a3a66"></div>
<div class="ab" style="left:1088px;top:773px;width:1px;height:1px;background:#fff"></div>
<div class="ab" style="left:1086px;top:775px;width:1px;height:1px;background:#fff"></div>
<div class="ab" style="left:1088px;top:775px;width:1px;height:1px;background:#fff"></div>
<div class="ab" style="left:1084px;top:777px;width:1px;height:1px;background:#fff"></div>
<div class="ab" style="left:1086px;top:777px;width:1px;height:1px;background:#fff"></div>
<div class="ab" style="left:1088px;top:777px;width:1px;height:1px;background:#fff"></div>
<div class="ab" style="left:1082px;top:779px;width:1px;height:1px;background:#fff"></div>
<div class="ab" style="left:1084px;top:779px;width:1px;height:1px;background:#fff"></div>
<div class="ab" style="left:1086px;top:779px;width:1px;height:1px;background:#fff"></div>
<div class="ab" style="left:1088px;top:779px;width:1px;height:1px;background:#fff"></div>
<div class="ab" style="left:0;top:0;width:1095px;height:786px;border:1px solid #eba33b;pointer-events:none"></div>
</body></html>
